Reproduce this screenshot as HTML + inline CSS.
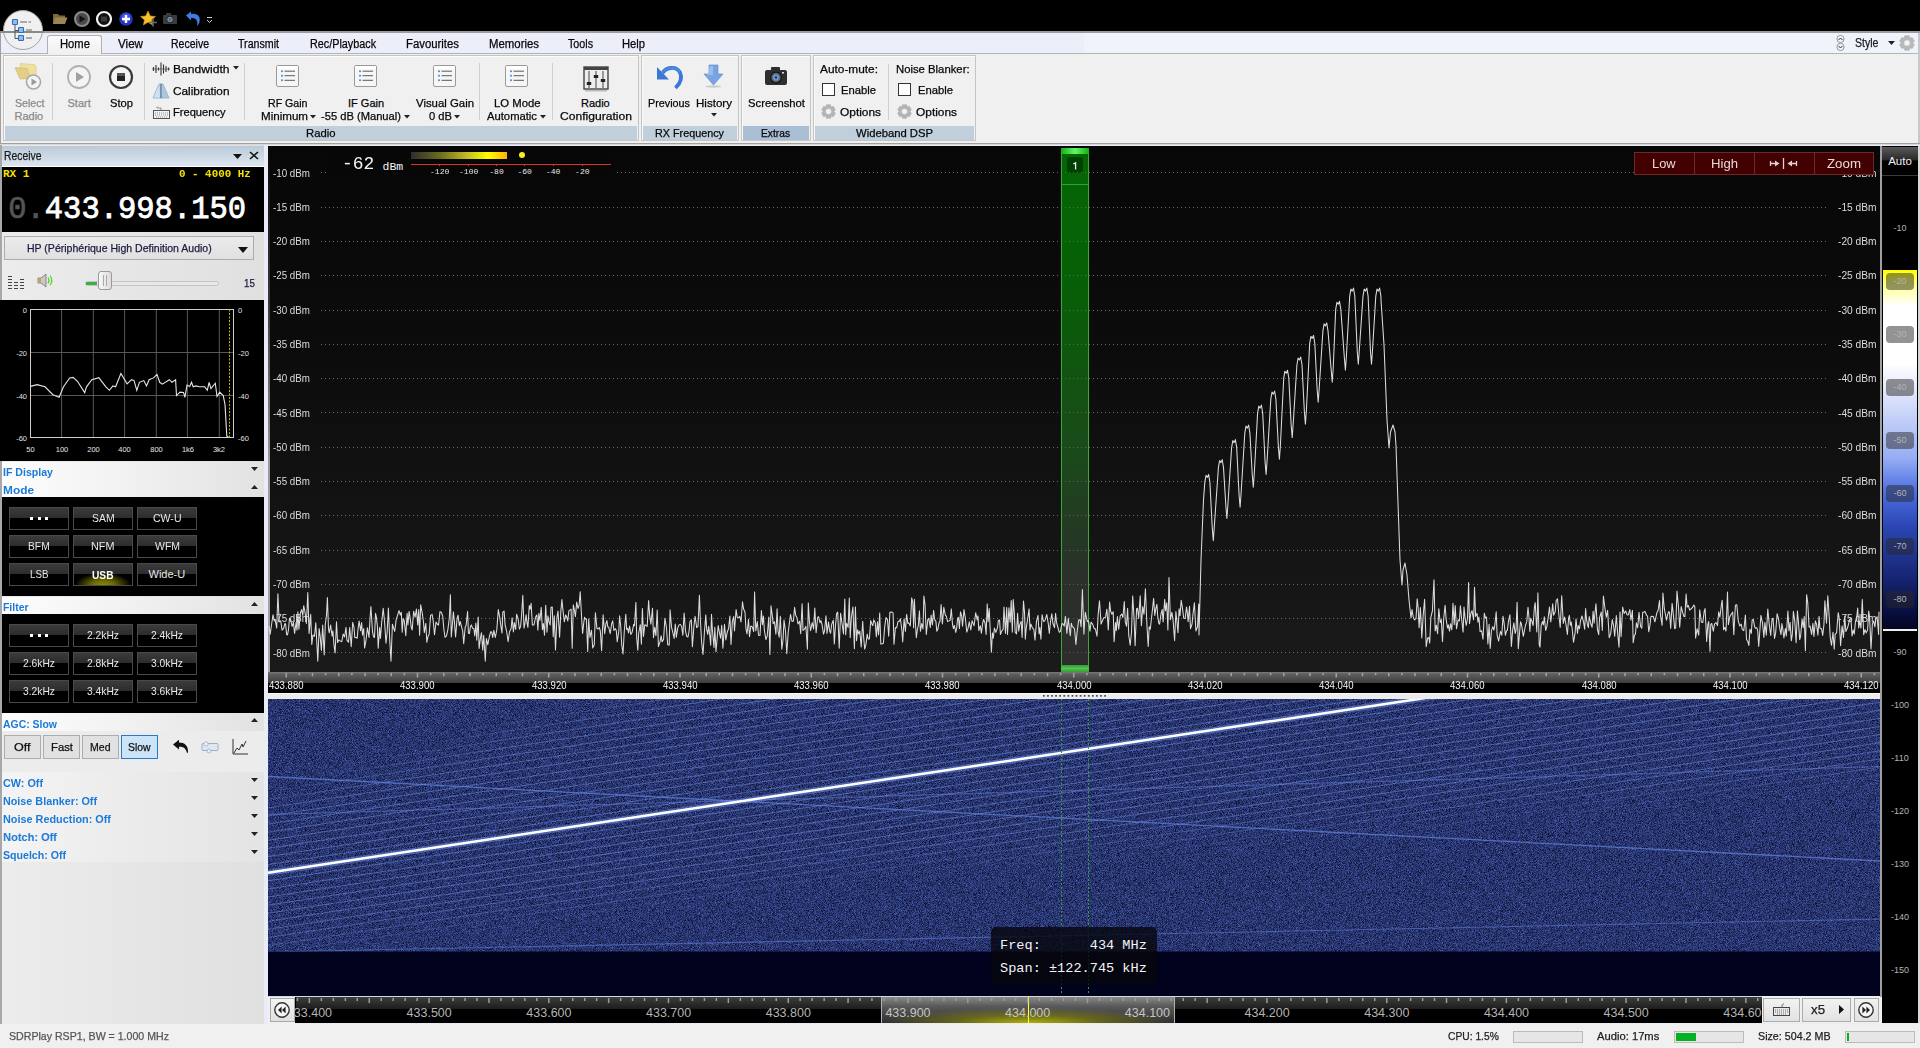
<!DOCTYPE html><html><head><meta charset="utf-8"><style>
*{margin:0;padding:0;box-sizing:border-box}
html,body{width:1920px;height:1048px;overflow:hidden;background:#e9ebf7;font-family:"Liberation Sans",sans-serif;font-size:12px;color:#000}
.a{position:absolute}
svg.a{overflow:visible}
.s{font-family:"Liberation Sans",sans-serif;-webkit-text-stroke:0.25px currentColor}
.m{font-family:"Liberation Mono",monospace}
</style></head><body><div class="a" style="left:0;top:0;width:1920px;height:31px;background:#000"></div>
<div class="a" style="left:0;top:31px;width:1920px;height:2px;background:#9c9c9c"></div>
<div class="a" style="left:1px;top:33px;width:1083px;height:20px;background:#eceefa"></div>
<div class="a" style="left:1084px;top:33px;width:834px;height:20px;background:#eff3fb"></div>
<div class="a" style="left:0;top:33px;width:1px;height:112px;background:#a0a0a0"></div>
<div class="a" style="left:1918px;top:33px;width:2px;height:112px;background:#c8c8c8"></div>
<div class="a" style="left:1px;top:53px;width:1917px;height:1px;background:#b4b4b4"></div>
<div class="a" style="left:1px;top:54px;width:1917px;height:89px;background:#f0f0f0"></div>
<div class="a" style="left:0;top:143px;width:1920px;height:1px;background:#a0a0a0"></div>
<div class="a" style="left:0;top:144px;width:1920px;height:1px;background:#d8d8d8"></div>
<div class="a" style="left:47px;top:35px;width:55px;height:19px;background:linear-gradient(#fbfbfb,#f0f0f0);border:1px solid #b0b0b0;border-bottom:none;border-radius:3px 3px 0 0"></div>
<div class="a s" style="left:60.0px;top:36.84px;font-weight:normal;font-size:12px;line-height:14px;color:#080808;white-space:nowrap;transform:scaleX(0.937);transform-origin:0 0;">Home</div>
<div class="a s" style="left:118.0px;top:36.84px;font-weight:normal;font-size:12px;line-height:14px;color:#080808;white-space:nowrap;transform:scaleX(0.969);transform-origin:0 0;">View</div>
<div class="a s" style="left:171.0px;top:36.84px;font-weight:normal;font-size:12px;line-height:14px;color:#080808;white-space:nowrap;transform:scaleX(0.877);transform-origin:0 0;">Receive</div>
<div class="a s" style="left:238.0px;top:36.84px;font-weight:normal;font-size:12px;line-height:14px;color:#080808;white-space:nowrap;transform:scaleX(0.887);transform-origin:0 0;">Transmit</div>
<div class="a s" style="left:310.0px;top:36.84px;font-weight:normal;font-size:12px;line-height:14px;color:#080808;white-space:nowrap;transform:scaleX(0.900);transform-origin:0 0;">Rec/Playback</div>
<div class="a s" style="left:406.0px;top:36.84px;font-weight:normal;font-size:12px;line-height:14px;color:#080808;white-space:nowrap;transform:scaleX(0.946);transform-origin:0 0;">Favourites</div>
<div class="a s" style="left:489.0px;top:36.84px;font-weight:normal;font-size:12px;line-height:14px;color:#080808;white-space:nowrap;transform:scaleX(0.949);transform-origin:0 0;">Memories</div>
<div class="a s" style="left:568.0px;top:36.84px;font-weight:normal;font-size:12px;line-height:14px;color:#080808;white-space:nowrap;transform:scaleX(0.892);transform-origin:0 0;">Tools</div>
<div class="a s" style="left:622.0px;top:36.84px;font-weight:normal;font-size:12px;line-height:14px;color:#080808;white-space:nowrap;transform:scaleX(0.932);transform-origin:0 0;">Help</div>
<div class="a" style="left:3px;top:10px;width:40px;height:40px;border-radius:50%;background:#f0f0f0;border:1px solid #a4a4a4"></div>
<div class="a" style="left:0;top:31px;width:44px;height:2px;background:#8a8a8a"></div>
<svg class="a" style="left:10px;top:17px" width="26" height="26" viewBox="0 0 26 26">
<path d="M5 8 V21.5 H8.5 M5 13.5 H8.5" stroke="#555" stroke-width="1" fill="none"/>
<rect x="2.5" y="2.5" width="5" height="5" rx=".8" fill="#8fc0ea" stroke="#2f6db5" stroke-width="1.1"/>
<rect x="8.5" y="10.5" width="5" height="5" rx=".8" fill="#8fc0ea" stroke="#2f6db5" stroke-width="1.1"/>
<rect x="8.5" y="18.5" width="5" height="5" rx=".8" fill="#8fc0ea" stroke="#2f6db5" stroke-width="1.1"/>
<path d="M10 5 H17 M18.5 5 H21 M16 13 H22 M16 21 H22" stroke="#555" stroke-width=".9"/>
</svg>
<svg class="a" style="left:50px;top:8px" width="170" height="22" viewBox="0 0 170 22">
<path d="M3 6 H8 L9.5 7.5 H15 V16 H3 Z" fill="#7a6a3a"/><path d="M3 16 L5 9.5 H17.5 L15 16 Z" fill="#9a8650"/>
<circle cx="32" cy="11" r="7" fill="#4a4a4a" stroke="#8a8a8a" stroke-width="2"/><path d="M29.5 7.5 L35.5 11 L29.5 14.5Z" fill="#111"/>
<circle cx="54" cy="11" r="7" fill="#111" stroke="#f2f2f2" stroke-width="2.2"/><rect x="51" y="8.5" width="6" height="5" fill="#3a3a3a"/>
<circle cx="76" cy="11" r="6.8" fill="#2535c8"/><circle cx="76" cy="9.5" r="4.5" fill="#4a6ae8" opacity=".6"/><path d="M76 7 V15 M72 11 H80" stroke="#fff" stroke-width="2.4"/>
<path d="M98 3 L100.3 8 L105.5 8.5 L101.5 12 L102.7 17 L98 14.3 L93.3 17 L94.5 12 L90.5 8.5 L95.7 8Z" fill="#f6c030" stroke="#e09010" stroke-width=".6"/><path d="M103 10.5 V18.5 M99 14.5 H107" stroke="#6a6a6a" stroke-width="1.6"/>
<rect x="113" y="7" width="14" height="9" rx="1" fill="#3c3c3c"/><rect x="116" y="5" width="5" height="3" fill="#3c3c3c"/><circle cx="120" cy="11.5" r="3.3" fill="#7a8a9a" stroke="#222" stroke-width="1"/><circle cx="120" cy="11.5" r="1.3" fill="#3a6aa0"/>
<path d="M136 7.5 L141 3.5 V6 C147 5 151 8.5 149.5 14 C149 16 148 17 147 18 C148 14 147 9.5 141 10 V12.5Z" fill="#3d7de0"/>
<path d="M157 9.5 H162 M157 12 L159.5 14.5 L162 12" stroke="#ccc" stroke-width="1" fill="none"/>
</svg>
<svg class="a" style="left:1834px;top:35px" width="13" height="16" viewBox="0 0 13 16"><circle cx="6.5" cy="4" r="3.6" fill="none" stroke="#999" stroke-width="1"/><circle cx="6.5" cy="12" r="3.6" fill="none" stroke="#999" stroke-width="1"/><path d="M4.5 5 L6.5 3 L8.5 5 M4.5 11 L6.5 13 L8.5 11" stroke="#333" stroke-width="1" fill="none"/></svg>
<div class="a s" style="left:1855.0px;top:35.84px;font-weight:normal;font-size:12px;line-height:14px;color:#1e1e1e;white-space:nowrap;transform:scaleX(0.881);transform-origin:0 0;">Style</div>
<svg class="a" style="left:1888px;top:41px" width="7" height="4"><path d="M0 0H7L3.5 4Z" fill="#222"/></svg>
<svg class="a" style="left:1899px;top:35px" width="16" height="16" viewBox="0 0 16 16"><path d="M5.22 3.14 L5.75 0.74 L10.25 0.74 L10.78 3.14 L10.82 3.16 L13.16 2.42 L15.41 6.31 L13.60 7.98 L13.60 8.02 L15.41 9.69 L13.16 13.58 L10.82 12.84 L10.78 12.86 L10.25 15.26 L5.75 15.26 L5.22 12.86 L5.18 12.84 L2.84 13.58 L0.59 9.69 L2.40 8.02 L2.40 7.98 L0.59 6.31 L2.84 2.42 L5.18 3.16Z" fill="#b8b8b8" stroke="#a8a8a8" stroke-width=".5"/><circle cx="8" cy="8" r="3.2" fill="#f2f2f2" stroke="#aaa" stroke-width=".5"/></svg>
<div class="a" style="left:3px;top:55px;width:636px;height:86px;border:1px solid #c4c4c4;background:#f0f0f0;box-shadow:inset 1px 1px 0 #fbfbfb"></div><div class="a" style="left:5px;top:126px;width:632px;height:14px;background:#c1cfdd"></div><div class="a s" style="left:306.0px;top:126.99px;font-weight:normal;font-size:11px;line-height:13px;color:#080808;white-space:nowrap;transform:scaleX(1.026);transform-origin:0 0;">Radio</div>
<div class="a" style="left:641px;top:55px;width:98px;height:86px;border:1px solid #c4c4c4;background:#f0f0f0;box-shadow:inset 1px 1px 0 #fbfbfb"></div><div class="a" style="left:643px;top:126px;width:94px;height:14px;background:#c1cfdd"></div><div class="a s" style="left:655.0px;top:126.99px;font-weight:normal;font-size:11px;line-height:13px;color:#080808;white-space:nowrap;transform:scaleX(0.981);transform-origin:0 0;">RX Frequency</div>
<div class="a" style="left:741px;top:55px;width:70px;height:86px;border:1px solid #c4c4c4;background:#f0f0f0;box-shadow:inset 1px 1px 0 #fbfbfb"></div><div class="a" style="left:743px;top:126px;width:66px;height:14px;background:#a9bdd5"></div><div class="a s" style="left:761.0px;top:126.99px;font-weight:normal;font-size:11px;line-height:13px;color:#080808;white-space:nowrap;transform:scaleX(0.930);transform-origin:0 0;">Extras</div>
<div class="a" style="left:813px;top:55px;width:163px;height:86px;border:1px solid #c4c4c4;background:#f0f0f0;box-shadow:inset 1px 1px 0 #fbfbfb"></div><div class="a" style="left:815px;top:126px;width:159px;height:14px;background:#c1cfdd"></div><div class="a s" style="left:856.0px;top:126.99px;font-weight:normal;font-size:11px;line-height:13px;color:#080808;white-space:nowrap;transform:scaleX(1.024);transform-origin:0 0;">Wideband DSP</div>
<svg class="a" style="left:14px;top:62px" width="30" height="30" viewBox="0 0 30 30">
<path d="M6 1.5 L20 2.5 L22 4 V16 L8 16 Z" fill="#efe0a0" stroke="#d8c27a" stroke-width=".6"/>
<path d="M1 5.5 L13 6.5 L17 16.5 L6 17 Z" fill="#e2cf86" stroke="#cdb56a" stroke-width=".6"/>
<circle cx="19.5" cy="20" r="7" fill="#f4f4f4" stroke="#a8a8a8" stroke-width="1.6"/><path d="M17.5 16.5 L23 20 L17.5 23.5Z" fill="#9a9a9a"/>
</svg>
<div class="a s" style="left:14.5px;top:97.39px;font-weight:normal;font-size:11px;line-height:13px;color:#8a8a8a;white-space:nowrap;transform:scaleX(0.965);transform-origin:0 0;">Select</div>
<div class="a s" style="left:14.5px;top:110.39px;font-weight:normal;font-size:11px;line-height:13px;color:#8a8a8a;white-space:nowrap;">Radio</div>
<div class="a" style="left:52px;top:63px;width:1px;height:57px;background:#cfcfcf"></div>
<svg class="a" style="left:66px;top:64px" width="26" height="26" viewBox="0 0 26 26"><circle cx="13" cy="13" r="11" fill="#f4f4f4" stroke="#b0b0b0" stroke-width="1.8"/><path d="M10 8 L18 13 L10 18Z" fill="#a0a0a0"/></svg>
<svg class="a" style="left:108px;top:64px" width="26" height="26" viewBox="0 0 26 26"><circle cx="13" cy="13" r="11" fill="#f4f4f4" stroke="#3a3a3a" stroke-width="2.2"/><rect x="9" y="9" width="8" height="8" fill="#222"/><rect x="9" y="9" width="8" height="3" fill="#555"/></svg>
<div class="a s" style="left:67.5px;top:97.39px;font-weight:normal;font-size:11px;line-height:13px;color:#8a8a8a;white-space:nowrap;">Start</div>
<div class="a s" style="left:109.5px;top:97.39px;font-weight:normal;font-size:11px;line-height:13px;color:#080808;white-space:nowrap;transform:scaleX(1.016);transform-origin:0 0;">Stop</div>
<div class="a" style="left:144px;top:63px;width:1px;height:57px;background:#cfcfcf"></div>
<svg class="a" style="left:152px;top:62px" width="18" height="14" viewBox="0 0 18 14"><path d="M1.5 5V9M4 3V11M6.5 5.5V8.5M9 0.5V13.5M11.5 2.5V11.5M14 4V10M16.5 5.5V8.5" stroke="#333" stroke-width="1.1"/><path d="M0 7H18" stroke="#555" stroke-width=".8"/></svg>
<div class="a s" style="left:172.5px;top:62.59px;font-weight:normal;font-size:11px;line-height:13px;color:#080808;white-space:nowrap;transform:scaleX(1.100);transform-origin:0 0;">Bandwidth</div>
<svg class="a" style="left:233px;top:66px" width="6" height="4"><path d="M0 0H6L3 3.5Z" fill="#222"/></svg>
<svg class="a" style="left:152px;top:83px" width="18" height="16" viewBox="0 0 18 16"><path d="M7 1 H10 L10.5 15 H1 Z" fill="#cfe3f2" stroke="#8aaed0" stroke-width=".8"/><path d="M8 1 H11 L17 15 H8.5Z" fill="#a8c8e6" stroke="#8aaed0" stroke-width=".8"/><path d="M9 1V15" stroke="#666" stroke-width="1"/></svg>
<div class="a s" style="left:172.5px;top:84.69px;font-weight:normal;font-size:11px;line-height:13px;color:#080808;white-space:nowrap;transform:scaleX(1.075);transform-origin:0 0;">Calibration</div>
<svg class="a" style="left:153px;top:106px" width="17" height="13" viewBox="0 0 17 13"><rect x=".5" y="4.5" width="16" height="8" fill="#f4f4f4" stroke="#555" stroke-width="1"/><path d="M2 7H15M2 9H15M3 11H14" stroke="#777" stroke-width=".8" stroke-dasharray="1 1"/><path d="M8 4.5 V2 H4 V0.5" stroke="#777" stroke-width=".8" fill="none"/></svg>
<div class="a s" style="left:172.5px;top:106.19px;font-weight:normal;font-size:11px;line-height:13px;color:#080808;white-space:nowrap;transform:scaleX(1.010);transform-origin:0 0;">Frequency</div>
<div class="a" style="left:244px;top:63px;width:1px;height:57px;background:#cfcfcf"></div>
<svg class="a" style="left:275px;top:64px" width="25" height="24" viewBox="0 0 25 24">
<rect x="1.5" y="1.5" width="22" height="21" rx="1.5" fill="#f6f6f6" stroke="#9a9a9a" stroke-width="1"/>
<rect x="2" y="2" width="21" height="3" fill="#fff"/>
<circle cx="7" cy="7.2" r="1" fill="#3a8ad8"/><circle cx="7" cy="11.7" r="1" fill="#3a8ad8"/><circle cx="7" cy="16.3" r="1" fill="#3a8ad8"/>
<path d="M9.5 7.2H20M9.5 11.7H20M9.5 16.3H20" stroke="#5a5a5a" stroke-width="1"/>
</svg>
<div class="a s" style="left:268.0px;top:97.39px;font-weight:normal;font-size:11px;line-height:13px;color:#080808;white-space:nowrap;transform:scaleX(0.965);transform-origin:0 0;">RF Gain</div>
<div class="a s" style="left:260.5px;top:110.19px;font-weight:normal;font-size:11px;line-height:13px;color:#080808;white-space:nowrap;transform:scaleX(1.054);transform-origin:0 0;">Minimum</div>
<svg class="a" style="left:353px;top:64px" width="25" height="24" viewBox="0 0 25 24">
<rect x="1.5" y="1.5" width="22" height="21" rx="1.5" fill="#f6f6f6" stroke="#9a9a9a" stroke-width="1"/>
<rect x="2" y="2" width="21" height="3" fill="#fff"/>
<circle cx="7" cy="7.2" r="1" fill="#3a8ad8"/><circle cx="7" cy="11.7" r="1" fill="#3a8ad8"/><circle cx="7" cy="16.3" r="1" fill="#3a8ad8"/>
<path d="M9.5 7.2H20M9.5 11.7H20M9.5 16.3H20" stroke="#5a5a5a" stroke-width="1"/>
</svg>
<div class="a s" style="left:348.0px;top:97.39px;font-weight:normal;font-size:11px;line-height:13px;color:#080808;white-space:nowrap;">IF Gain</div>
<div class="a s" style="left:321.0px;top:110.19px;font-weight:normal;font-size:11px;line-height:13px;color:#080808;white-space:nowrap;transform:scaleX(1.014);transform-origin:0 0;">-55 dB (Manual)</div>
<svg class="a" style="left:432px;top:64px" width="25" height="24" viewBox="0 0 25 24">
<rect x="1.5" y="1.5" width="22" height="21" rx="1.5" fill="#f6f6f6" stroke="#9a9a9a" stroke-width="1"/>
<rect x="2" y="2" width="21" height="3" fill="#fff"/>
<circle cx="7" cy="7.2" r="1" fill="#3a8ad8"/><circle cx="7" cy="11.7" r="1" fill="#3a8ad8"/><circle cx="7" cy="16.3" r="1" fill="#3a8ad8"/>
<path d="M9.5 7.2H20M9.5 11.7H20M9.5 16.3H20" stroke="#5a5a5a" stroke-width="1"/>
</svg>
<div class="a s" style="left:416.0px;top:97.39px;font-weight:normal;font-size:11px;line-height:13px;color:#080808;white-space:nowrap;transform:scaleX(1.035);transform-origin:0 0;">Visual Gain</div>
<div class="a s" style="left:429.0px;top:110.19px;font-weight:normal;font-size:11px;line-height:13px;color:#080808;white-space:nowrap;transform:scaleX(1.016);transform-origin:0 0;">0 dB</div>
<svg class="a" style="left:310px;top:115px" width="6" height="4"><path d="M0 0H6L3 3.5Z" fill="#222"/></svg>
<svg class="a" style="left:404px;top:115px" width="6" height="4"><path d="M0 0H6L3 3.5Z" fill="#222"/></svg>
<svg class="a" style="left:454px;top:115px" width="6" height="4"><path d="M0 0H6L3 3.5Z" fill="#222"/></svg>
<div class="a" style="left:479px;top:63px;width:1px;height:57px;background:#cfcfcf"></div>
<svg class="a" style="left:504px;top:64px" width="25" height="24" viewBox="0 0 25 24">
<rect x="1.5" y="1.5" width="22" height="21" rx="1.5" fill="#f6f6f6" stroke="#9a9a9a" stroke-width="1"/>
<rect x="2" y="2" width="21" height="3" fill="#fff"/>
<circle cx="7" cy="7.2" r="1" fill="#3a8ad8"/><circle cx="7" cy="11.7" r="1" fill="#3a8ad8"/><circle cx="7" cy="16.3" r="1" fill="#3a8ad8"/>
<path d="M9.5 7.2H20M9.5 11.7H20M9.5 16.3H20" stroke="#5a5a5a" stroke-width="1"/>
</svg>
<div class="a s" style="left:494.0px;top:97.39px;font-weight:normal;font-size:11px;line-height:13px;color:#080808;white-space:nowrap;transform:scaleX(1.028);transform-origin:0 0;">LO Mode</div>
<div class="a s" style="left:487.0px;top:110.19px;font-weight:normal;font-size:11px;line-height:13px;color:#080808;white-space:nowrap;transform:scaleX(1.022);transform-origin:0 0;">Automatic</div>
<svg class="a" style="left:540px;top:115px" width="6" height="4"><path d="M0 0H6L3 3.5Z" fill="#222"/></svg>
<div class="a" style="left:552px;top:63px;width:1px;height:57px;background:#cfcfcf"></div>
<svg class="a" style="left:583px;top:66px" width="26" height="26" viewBox="0 0 26 26">
<rect x="1" y="1" width="24" height="22" fill="#eee" stroke="#444" stroke-width="1.4"/><rect x="1" y="1" width="24" height="3" fill="#444"/>
<path d="M6 5V22M13 5V22M20 5V22" stroke="#444" stroke-width="1"/>
<rect x="3.8" y="16" width="4.4" height="3" fill="#222"/><rect x="10.8" y="9" width="4.4" height="3" fill="#222"/><rect x="17.8" y="13" width="4.4" height="3" fill="#222"/>
<rect x="2" y="24" width="22" height="1.5" fill="#bbb"/>
</svg>
<div class="a s" style="left:581.0px;top:97.39px;font-weight:normal;font-size:11px;line-height:13px;color:#080808;white-space:nowrap;">Radio</div>
<div class="a s" style="left:560.0px;top:110.19px;font-weight:normal;font-size:11px;line-height:13px;color:#080808;white-space:nowrap;transform:scaleX(1.100);transform-origin:0 0;">Configuration</div>
<svg class="a" style="left:655px;top:63px" width="30" height="28" viewBox="0 0 30 28"><path d="M2 4 L2 16.5 L14 16.5Z" fill="#3a78d8"/><path d="M7 11 C10 4.5, 21 2, 25 9.5 C27.5 14.5, 25 20.5, 20.5 25" stroke="#3a78d8" stroke-width="3.8" fill="none" stroke-linecap="butt"/><path d="M7 11 C10 4.5, 21 2, 25 9.5" stroke="#6aa0f0" stroke-width="1.2" fill="none" opacity=".6"/></svg>
<div class="a s" style="left:648.0px;top:97.39px;font-weight:normal;font-size:11px;line-height:13px;color:#080808;white-space:nowrap;transform:scaleX(0.981);transform-origin:0 0;">Previous</div>
<svg class="a" style="left:703px;top:64px" width="21" height="24" viewBox="0 0 21 24"><path d="M6 1 H15 V10 H20 L10.5 21 L1 10 H6Z" fill="#7aa4e2" stroke="#5a86c8" stroke-width=".6"/><path d="M7 2 H10 V11 H4Z" fill="#a8c6f0" opacity=".7"/><ellipse cx="10.5" cy="22.5" rx="8" ry="1.2" fill="#ccc"/></svg>
<div class="a s" style="left:696.0px;top:97.39px;font-weight:normal;font-size:11px;line-height:13px;color:#080808;white-space:nowrap;transform:scaleX(1.052);transform-origin:0 0;">History</div>
<svg class="a" style="left:710.5px;top:113px" width="6" height="4"><path d="M0 0H6L3 3.5Z" fill="#222"/></svg>
<svg class="a" style="left:764px;top:66px" width="24" height="20" viewBox="0 0 24 20"><rect x="1" y="4" width="22" height="15" rx="2" fill="#2e2e2e"/><rect x="7" y="1" width="9" height="4" rx="1" fill="#2e2e2e"/><circle cx="12" cy="11.5" r="5.3" fill="#5a6a7a" stroke="#151515" stroke-width="1.2"/><circle cx="12" cy="11.5" r="3" fill="#6a9ad0"/><circle cx="12" cy="11.5" r="1.2" fill="#1e3a60"/><rect x="18" y="6" width="2" height="1.5" fill="#ddd"/></svg>
<div class="a s" style="left:748.0px;top:97.39px;font-weight:normal;font-size:11px;line-height:13px;color:#080808;white-space:nowrap;transform:scaleX(1.024);transform-origin:0 0;">Screenshot</div>
<div class="a s" style="left:820.0px;top:62.99px;font-weight:normal;font-size:11px;line-height:13px;color:#080808;white-space:nowrap;transform:scaleX(1.078);transform-origin:0 0;">Auto-mute:</div>
<div class="a s" style="left:896.0px;top:62.99px;font-weight:normal;font-size:11px;line-height:13px;color:#080808;white-space:nowrap;transform:scaleX(1.028);transform-origin:0 0;">Noise Blanker:</div>
<div class="a" style="left:822px;top:83px;width:13px;height:13px;background:#fff;border:1px solid #333"></div>
<div class="a" style="left:898px;top:83px;width:13px;height:13px;background:#fff;border:1px solid #333"></div>
<div class="a s" style="left:841.0px;top:84.49px;font-weight:normal;font-size:11px;line-height:13px;color:#080808;white-space:nowrap;transform:scaleX(1.022);transform-origin:0 0;">Enable</div>
<div class="a s" style="left:917.5px;top:84.49px;font-weight:normal;font-size:11px;line-height:13px;color:#080808;white-space:nowrap;transform:scaleX(1.022);transform-origin:0 0;">Enable</div>
<svg class="a" style="left:821px;top:104px" width="15" height="15" viewBox="0 0 16 16"><path d="M5.22 3.14 L5.75 0.74 L10.25 0.74 L10.78 3.14 L10.82 3.16 L13.16 2.42 L15.41 6.31 L13.60 7.98 L13.60 8.02 L15.41 9.69 L13.16 13.58 L10.82 12.84 L10.78 12.86 L10.25 15.26 L5.75 15.26 L5.22 12.86 L5.18 12.84 L2.84 13.58 L0.59 9.69 L2.40 8.02 L2.40 7.98 L0.59 6.31 L2.84 2.42 L5.18 3.16Z" fill="#b4b4b4" stroke="#a8a8a8" stroke-width=".5"/><circle cx="8" cy="8" r="3.2" fill="#f2f2f2" stroke="#aaa" stroke-width=".5"/></svg>
<svg class="a" style="left:897px;top:104px" width="15" height="15" viewBox="0 0 16 16"><path d="M5.22 3.14 L5.75 0.74 L10.25 0.74 L10.78 3.14 L10.82 3.16 L13.16 2.42 L15.41 6.31 L13.60 7.98 L13.60 8.02 L15.41 9.69 L13.16 13.58 L10.82 12.84 L10.78 12.86 L10.25 15.26 L5.75 15.26 L5.22 12.86 L5.18 12.84 L2.84 13.58 L0.59 9.69 L2.40 8.02 L2.40 7.98 L0.59 6.31 L2.84 2.42 L5.18 3.16Z" fill="#b4b4b4" stroke="#a8a8a8" stroke-width=".5"/><circle cx="8" cy="8" r="3.2" fill="#f2f2f2" stroke="#aaa" stroke-width=".5"/></svg>
<div class="a s" style="left:840.0px;top:105.99px;font-weight:normal;font-size:11px;line-height:13px;color:#080808;white-space:nowrap;transform:scaleX(1.082);transform-origin:0 0;">Options</div>
<div class="a s" style="left:916.0px;top:105.99px;font-weight:normal;font-size:11px;line-height:13px;color:#080808;white-space:nowrap;transform:scaleX(1.082);transform-origin:0 0;">Options</div>
<div class="a" style="left:888px;top:64px;width:1px;height:56px;background:#cfcfcf"></div>
<div class="a" style="left:0;top:145px;width:2px;height:879px;background:#a8a8a8"></div>
<div class="a" style="left:2px;top:145px;width:262px;height:879px;background:linear-gradient(90deg,#ececec,#e0e0e0)"></div>
<div class="a" style="left:2px;top:146px;width:262px;height:20px;background:linear-gradient(#bccad8,#dce6f1)"></div>
<div class="a s" style="left:4.3px;top:148.84px;font-weight:normal;font-size:12px;line-height:14px;color:#1b1b1b;white-space:nowrap;transform:scaleX(0.863);transform-origin:0 0;">Receive</div>
<svg class="a" style="left:233px;top:154px" width="9" height="5"><path d="M0 0H9L4.5 5Z" fill="#111"/></svg>
<svg class="a" style="left:249px;top:151px" width="10" height="9"><path d="M1 1L9 8M9 1L1 8" stroke="#111" stroke-width="1.6"/></svg>
<div class="a" style="left:2px;top:166px;width:262px;height:1px;background:#fff"></div>
<div class="a" style="left:2px;top:167px;width:262px;height:65px;background:#000"></div>
<div class="a m" style="left:3.0px;top:168.37px;font-weight:bold;font-size:11px;line-height:13px;color:#f4e000;white-space:nowrap;;-webkit-text-stroke:0">RX 1</div>
<div class="a m" style="left:178.7px;top:167.97px;font-weight:bold;font-size:11px;line-height:13px;color:#f4e000;white-space:nowrap;transform:scaleX(0.989);transform-origin:0 0;;-webkit-text-stroke:0">0 - 4000 Hz</div>
<div class="a m" style="left:8.2px;top:191.68px;font-weight:normal;font-size:30.5px;line-height:37px;color:#555555;white-space:nowrap;-webkit-text-stroke:0.7px #555">0.</div>
<div class="a m" style="left:44.8px;top:191.68px;font-weight:normal;font-size:30.5px;line-height:37px;color:#ffffff;white-space:nowrap;-webkit-text-stroke:0.8px #fff">433.998.150</div>
<div class="a" style="left:4px;top:236px;width:250px;height:24px;background:linear-gradient(#ebebeb,#e0e0e0);border:1px solid #acacac"></div>
<div class="a s" style="left:27.2px;top:241.89px;font-weight:normal;font-size:11px;line-height:13px;color:#1a1a40;white-space:nowrap;transform:scaleX(0.957);transform-origin:0 0;">HP (Périphérique High Definition Audio)</div>
<svg class="a" style="left:238px;top:247px" width="10" height="6"><path d="M0 0H10L5 6Z" fill="#111"/></svg>
<svg class="a" style="left:8px;top:276px" width="17" height="14" viewBox="0 0 17 14"><g fill="#444"><rect x="0" y="0" width="4" height="1"/><rect x="0" y="3" width="4" height="1"/><rect x="0" y="6" width="4" height="1"/><rect x="0" y="9" width="4" height="1"/><rect x="0" y="12" width="4" height="1"/>
<rect x="6" y="6" width="4" height="1"/><rect x="6" y="9" width="4" height="1"/><rect x="6" y="12" width="4" height="1"/>
<rect x="12" y="3" width="4" height="1"/><rect x="12" y="6" width="4" height="1"/><rect x="12" y="9" width="4" height="1"/><rect x="12" y="12" width="4" height="1"/></g></svg>
<svg class="a" style="left:37px;top:273px" width="18" height="15" viewBox="0 0 18 15"><path d="M1 5H4L9 1V14L4 10H1Z" fill="#c8c8c8" stroke="#777" stroke-width=".8"/><path d="M2 6H4V9H2Z" fill="#e0a020"/><path d="M11 4.5Q13 7.5 11 10.5M13 2.5Q16.5 7.5 13 12.5" stroke="#5ad030" stroke-width="1.2" fill="none"/></svg>
<div class="a" style="left:85px;top:281px;width:134px;height:5px;border-radius:3px;background:#e8e8e8;border:1px solid #c4c4c4"></div>
<div class="a" style="left:86px;top:282px;width:11px;height:3px;background:#3cb040"></div>
<div class="a" style="left:98px;top:271px;width:14px;height:19px;border-radius:3px;background:linear-gradient(90deg,#f8f8f8,#dcdcdc);border:1px solid #9a9a9a"></div>
<div class="a" style="left:103px;top:275px;width:1px;height:11px;background:#aaa"></div><div class="a" style="left:106px;top:275px;width:1px;height:11px;background:#aaa"></div>
<div class="a s" style="left:243.9px;top:276.69px;font-weight:normal;font-size:11px;line-height:13px;color:#1a1a40;white-space:nowrap;transform:scaleX(0.883);transform-origin:0 0;">15</div>
<div class="a" style="left:0px;top:300px;width:264px;height:161px;background:#000"></div>
<svg class="a" style="left:0;top:0" width="264" height="470" viewBox="0 0 264 470"><path d="M61.6 309.5V437.5" stroke="#585858" stroke-width="1"/><path d="M93.3 309.5V437.5" stroke="#585858" stroke-width="1"/><path d="M124.6 309.5V437.5" stroke="#585858" stroke-width="1"/><path d="M156.3 309.5V437.5" stroke="#585858" stroke-width="1"/><path d="M187.4 309.5V437.5" stroke="#585858" stroke-width="1"/><path d="M219.3 309.5V437.5" stroke="#585858" stroke-width="1"/><path d="M30.5 352.5H233.5" stroke="#585858" stroke-width="1"/><path d="M30.5 395.5H233.5" stroke="#585858" stroke-width="1"/><rect x="30.5" y="309.5" width="203.0" height="128.0" fill="none" stroke="#cfcfcf" stroke-width="1"/><path d="M229.5 309.5V437.5" stroke="#c8b400" stroke-width="1" stroke-dasharray="2 1.5"/><text x="27" y="312.5" fill="#e0e0e0" font-size="7.5" text-anchor="end" class="s">0</text><text x="238" y="312.5" fill="#e0e0e0" font-size="7.5" class="s">0</text><text x="27" y="355.5" fill="#e0e0e0" font-size="7.5" text-anchor="end" class="s">-20</text><text x="238" y="355.5" fill="#e0e0e0" font-size="7.5" class="s">-20</text><text x="27" y="398.5" fill="#e0e0e0" font-size="7.5" text-anchor="end" class="s">-40</text><text x="238" y="398.5" fill="#e0e0e0" font-size="7.5" class="s">-40</text><text x="27" y="441" fill="#e0e0e0" font-size="7.5" text-anchor="end" class="s">-60</text><text x="238" y="441" fill="#e0e0e0" font-size="7.5" class="s">-60</text><text x="30.5" y="451.5" fill="#e8e8e8" font-size="7.5" text-anchor="middle" class="s">50</text><text x="62" y="451.5" fill="#e8e8e8" font-size="7.5" text-anchor="middle" class="s">100</text><text x="93.5" y="451.5" fill="#e8e8e8" font-size="7.5" text-anchor="middle" class="s">200</text><text x="124.5" y="451.5" fill="#e8e8e8" font-size="7.5" text-anchor="middle" class="s">400</text><text x="156.5" y="451.5" fill="#e8e8e8" font-size="7.5" text-anchor="middle" class="s">800</text><text x="188" y="451.5" fill="#e8e8e8" font-size="7.5" text-anchor="middle" class="s">1k6</text><text x="219" y="451.5" fill="#e8e8e8" font-size="7.5" text-anchor="middle" class="s">3k2</text><path d="M30.5 386.4 L37.1 384.6 L45.0 386.8 L52.9 394.7 L59.1 397.3 L63.5 386.8 L69.7 377.9 L73.2 377.4 L77.6 381.5 L84.7 392.6 L86.5 386.8 L91.8 379.7 L98.8 377.6 L105.9 386.8 L109.4 390.3 L112.9 385.9 L115.6 386.8 L120.9 373.5 L127.1 383.8 L131.5 379.7 L134.1 380.6 L136.8 390.3 L139.4 382.3 L143.8 380.6 L146.5 385.9 L149.1 379.7 L153.5 377.9 L157.0 374.4 L159.7 382.3 L162.3 384.1 L169.4 379.7 L172.0 382.3 L175.6 379.7 L176.5 395.6 L180.0 392.1 L183.5 392.4 L184.9 397.3 L187.0 385.0 L189.7 386.4 L191.5 382.3 L193.2 386.8 L195.9 385.9 L199.4 386.8 L204.7 386.8 L207.3 390.3 L209.1 382.3 L210.9 388.5 L215.3 383.2 L217.0 396.5 L219.7 392.1 L223.2 395.6 L225.0 404.4 L226.8 436.2 L228.5 437.1" stroke="#e6e6e6" stroke-width="1.1" fill="none"/></svg>
<div class="a" style="left:2px;top:462px;width:262px;height:18px;background:linear-gradient(90deg,#fdfdfd 0%,#f2f2f2 45%,#e2e2e2 100%)"></div><div class="a s" style="left:3.0px;top:465.69px;font-weight:bold;font-size:11px;line-height:13px;color:#1a7ad8;white-space:nowrap;transform:scaleX(0.962);transform-origin:0 0;;-webkit-text-stroke:0">IF Display</div><svg class="a" style="left:251px;top:467px" width="7" height="4"><path d="M0 0H7L3.5 4Z" fill="#222"/></svg>
<div class="a" style="left:2px;top:480px;width:262px;height:17px;background:linear-gradient(90deg,#fdfdfd 0%,#f2f2f2 45%,#e2e2e2 100%)"></div><div class="a s" style="left:3.0px;top:483.69px;font-weight:bold;font-size:11px;line-height:13px;color:#1a7ad8;white-space:nowrap;transform:scaleX(1.079);transform-origin:0 0;;-webkit-text-stroke:0">Mode</div><svg class="a" style="left:251px;top:485px" width="7" height="4"><path d="M0 4H7L3.5 0Z" fill="#222"/></svg>
<div class="a" style="left:2px;top:497px;width:262px;height:99px;background:#000"></div>
<div class="a" style="left:9px;top:507px;width:60px;height:23px;border:1px solid #4a4a4a;background:linear-gradient(#3b3b3b 0,#2c2c2c 48%,#000 49%,#000 100%)"></div><div class="a" style="left:30.0px;top:517px;width:3px;height:3px;background:#fff"></div><div class="a" style="left:37.5px;top:517px;width:3px;height:3px;background:#fff"></div><div class="a" style="left:45.0px;top:517px;width:3px;height:3px;background:#fff"></div>
<div class="a" style="left:73px;top:507px;width:60px;height:23px;border:1px solid #4a4a4a;background:linear-gradient(#3b3b3b 0,#2c2c2c 48%,#000 49%,#000 100%)"></div><div class="a s" style="left:91.7px;top:512.19px;font-weight:normal;font-size:11px;line-height:13px;color:#e8e8e8;white-space:nowrap;transform:scaleX(0.948);transform-origin:0 0;;-webkit-text-stroke:0">SAM</div>
<div class="a" style="left:137px;top:507px;width:60px;height:23px;border:1px solid #4a4a4a;background:linear-gradient(#3b3b3b 0,#2c2c2c 48%,#000 49%,#000 100%)"></div><div class="a s" style="left:152.8px;top:512.19px;font-weight:normal;font-size:11px;line-height:13px;color:#e8e8e8;white-space:nowrap;transform:scaleX(0.958);transform-origin:0 0;;-webkit-text-stroke:0">CW-U</div>
<div class="a" style="left:9px;top:535px;width:60px;height:23px;border:1px solid #4a4a4a;background:linear-gradient(#3b3b3b 0,#2c2c2c 48%,#000 49%,#000 100%)"></div><div class="a s" style="left:28.1px;top:540.19px;font-weight:normal;font-size:11px;line-height:13px;color:#e8e8e8;white-space:nowrap;transform:scaleX(0.935);transform-origin:0 0;;-webkit-text-stroke:0">BFM</div>
<div class="a" style="left:73px;top:535px;width:60px;height:23px;border:1px solid #4a4a4a;background:linear-gradient(#3b3b3b 0,#2c2c2c 48%,#000 49%,#000 100%)"></div><div class="a s" style="left:91.3px;top:540.19px;font-weight:normal;font-size:11px;line-height:13px;color:#e8e8e8;white-space:nowrap;transform:scaleX(0.982);transform-origin:0 0;;-webkit-text-stroke:0">NFM</div>
<div class="a" style="left:137px;top:535px;width:60px;height:23px;border:1px solid #4a4a4a;background:linear-gradient(#3b3b3b 0,#2c2c2c 48%,#000 49%,#000 100%)"></div><div class="a s" style="left:154.5px;top:540.19px;font-weight:normal;font-size:11px;line-height:13px;color:#e8e8e8;white-space:nowrap;transform:scaleX(0.952);transform-origin:0 0;;-webkit-text-stroke:0">WFM</div>
<div class="a" style="left:9px;top:563px;width:60px;height:23px;border:1px solid #4a4a4a;background:linear-gradient(#3b3b3b 0,#2c2c2c 48%,#000 49%,#000 100%)"></div><div class="a s" style="left:29.8px;top:568.19px;font-weight:normal;font-size:11px;line-height:13px;color:#e8e8e8;white-space:nowrap;transform:scaleX(0.890);transform-origin:0 0;;-webkit-text-stroke:0">LSB</div>
<div class="a" style="left:73px;top:563px;width:60px;height:23px;border:1px solid #4a4a4a;background:linear-gradient(#3b3b3b 0,#2c2c2c 48%,#000 49%,#000 100%)"></div><div class="a" style="left:75px;top:573px;width:56px;height:12px;background:radial-gradient(ellipse 50% 100% at 50% 100%,#8a8a00 0%,#6a6a00 40%,rgba(60,60,0,0) 100%)"></div><div class="a s" style="left:92.2px;top:567.51px;font-weight:bold;font-size:11.5px;line-height:14px;color:#fff;white-space:nowrap;transform:scaleX(0.886);transform-origin:0 0;;-webkit-text-stroke:0">USB</div>
<div class="a" style="left:137px;top:563px;width:60px;height:23px;border:1px solid #4a4a4a;background:linear-gradient(#3b3b3b 0,#2c2c2c 48%,#000 49%,#000 100%)"></div><div class="a s" style="left:148.5px;top:568.19px;font-weight:normal;font-size:11px;line-height:13px;color:#e8e8e8;white-space:nowrap;;-webkit-text-stroke:0">Wide-U</div>
<div class="a" style="left:2px;top:597px;width:262px;height:17px;background:linear-gradient(90deg,#fdfdfd 0%,#f2f2f2 45%,#e2e2e2 100%)"></div><div class="a s" style="left:3.0px;top:600.69px;font-weight:bold;font-size:11px;line-height:13px;color:#1a7ad8;white-space:nowrap;transform:scaleX(0.948);transform-origin:0 0;;-webkit-text-stroke:0">Filter</div><svg class="a" style="left:251px;top:602px" width="7" height="4"><path d="M0 4H7L3.5 0Z" fill="#222"/></svg>
<div class="a" style="left:2px;top:614px;width:262px;height:99px;background:#000"></div>
<div class="a" style="left:9px;top:624px;width:60px;height:23px;border:1px solid #4a4a4a;background:linear-gradient(#3b3b3b 0,#2c2c2c 48%,#000 49%,#000 100%)"></div><div class="a" style="left:30.0px;top:634px;width:3px;height:3px;background:#fff"></div><div class="a" style="left:37.5px;top:634px;width:3px;height:3px;background:#fff"></div><div class="a" style="left:45.0px;top:634px;width:3px;height:3px;background:#fff"></div>
<div class="a" style="left:73px;top:624px;width:60px;height:23px;border:1px solid #4a4a4a;background:linear-gradient(#3b3b3b 0,#2c2c2c 48%,#000 49%,#000 100%)"></div><div class="a s" style="left:87.0px;top:629.19px;font-weight:normal;font-size:11px;line-height:13px;color:#e8e8e8;white-space:nowrap;transform:scaleX(0.935);transform-origin:0 0;;-webkit-text-stroke:0">2.2kHz</div>
<div class="a" style="left:137px;top:624px;width:60px;height:23px;border:1px solid #4a4a4a;background:linear-gradient(#3b3b3b 0,#2c2c2c 48%,#000 49%,#000 100%)"></div><div class="a s" style="left:151.0px;top:629.19px;font-weight:normal;font-size:11px;line-height:13px;color:#e8e8e8;white-space:nowrap;transform:scaleX(0.935);transform-origin:0 0;;-webkit-text-stroke:0">2.4kHz</div>
<div class="a" style="left:9px;top:652px;width:60px;height:23px;border:1px solid #4a4a4a;background:linear-gradient(#3b3b3b 0,#2c2c2c 48%,#000 49%,#000 100%)"></div><div class="a s" style="left:23.0px;top:657.19px;font-weight:normal;font-size:11px;line-height:13px;color:#e8e8e8;white-space:nowrap;transform:scaleX(0.935);transform-origin:0 0;;-webkit-text-stroke:0">2.6kHz</div>
<div class="a" style="left:73px;top:652px;width:60px;height:23px;border:1px solid #4a4a4a;background:linear-gradient(#3b3b3b 0,#2c2c2c 48%,#000 49%,#000 100%)"></div><div class="a s" style="left:87.0px;top:657.19px;font-weight:normal;font-size:11px;line-height:13px;color:#e8e8e8;white-space:nowrap;transform:scaleX(0.935);transform-origin:0 0;;-webkit-text-stroke:0">2.8kHz</div>
<div class="a" style="left:137px;top:652px;width:60px;height:23px;border:1px solid #4a4a4a;background:linear-gradient(#3b3b3b 0,#2c2c2c 48%,#000 49%,#000 100%)"></div><div class="a s" style="left:151.0px;top:657.19px;font-weight:normal;font-size:11px;line-height:13px;color:#e8e8e8;white-space:nowrap;transform:scaleX(0.935);transform-origin:0 0;;-webkit-text-stroke:0">3.0kHz</div>
<div class="a" style="left:9px;top:680px;width:60px;height:23px;border:1px solid #4a4a4a;background:linear-gradient(#3b3b3b 0,#2c2c2c 48%,#000 49%,#000 100%)"></div><div class="a s" style="left:23.0px;top:685.19px;font-weight:normal;font-size:11px;line-height:13px;color:#e8e8e8;white-space:nowrap;transform:scaleX(0.935);transform-origin:0 0;;-webkit-text-stroke:0">3.2kHz</div>
<div class="a" style="left:73px;top:680px;width:60px;height:23px;border:1px solid #4a4a4a;background:linear-gradient(#3b3b3b 0,#2c2c2c 48%,#000 49%,#000 100%)"></div><div class="a s" style="left:87.0px;top:685.19px;font-weight:normal;font-size:11px;line-height:13px;color:#e8e8e8;white-space:nowrap;transform:scaleX(0.935);transform-origin:0 0;;-webkit-text-stroke:0">3.4kHz</div>
<div class="a" style="left:137px;top:680px;width:60px;height:23px;border:1px solid #4a4a4a;background:linear-gradient(#3b3b3b 0,#2c2c2c 48%,#000 49%,#000 100%)"></div><div class="a s" style="left:151.0px;top:685.19px;font-weight:normal;font-size:11px;line-height:13px;color:#e8e8e8;white-space:nowrap;transform:scaleX(0.935);transform-origin:0 0;;-webkit-text-stroke:0">3.6kHz</div>
<div class="a" style="left:2px;top:713px;width:262px;height:18px;background:linear-gradient(90deg,#fdfdfd 0%,#f2f2f2 45%,#e2e2e2 100%)"></div><div class="a s" style="left:3.0px;top:717.69px;font-weight:bold;font-size:11px;line-height:13px;color:#1a7ad8;white-space:nowrap;transform:scaleX(0.950);transform-origin:0 0;;-webkit-text-stroke:0">AGC: Slow</div><svg class="a" style="left:251px;top:718px" width="7" height="4"><path d="M0 4H7L3.5 0Z" fill="#222"/></svg>
<div class="a" style="left:2px;top:731px;width:262px;height:41px;background:#ececec"></div>
<div class="a" style="left:4px;top:735px;width:37px;height:24px;background:#e1e1e1;border:1px solid #adadad"></div>
<div class="a s" style="left:14.2px;top:741.19px;font-weight:normal;font-size:11px;line-height:13px;color:#111;white-space:nowrap;transform:scaleX(1.140);transform-origin:0 0;">Off</div>
<div class="a" style="left:43px;top:735px;width:37px;height:24px;background:#e1e1e1;border:1px solid #adadad"></div>
<div class="a s" style="left:50.5px;top:741.19px;font-weight:normal;font-size:11px;line-height:13px;color:#111;white-space:nowrap;transform:scaleX(1.028);transform-origin:0 0;">Fast</div>
<div class="a" style="left:82px;top:735px;width:37px;height:24px;background:#e1e1e1;border:1px solid #adadad"></div>
<div class="a s" style="left:90.2px;top:741.19px;font-weight:normal;font-size:11px;line-height:13px;color:#111;white-space:nowrap;transform:scaleX(0.958);transform-origin:0 0;">Med</div>
<div class="a" style="left:121px;top:735px;width:37px;height:24px;background:#cce4f7;border:1px solid #2a78c8"></div>
<div class="a s" style="left:128.2px;top:741.19px;font-weight:normal;font-size:11px;line-height:13px;color:#111;white-space:nowrap;transform:scaleX(0.944);transform-origin:0 0;">Slow</div>
<svg class="a" style="left:172px;top:739px" width="17" height="15" viewBox="0 0 17 15"><path d="M1 5.5 L7 0.8 V3.5 C12.5 3.5 16.5 6.5 16 13.5 L15 14 C14 9.5 11.5 7.5 7 7.8 V10.5Z" fill="#111"/></svg>
<svg class="a" style="left:201px;top:741px" width="18" height="12" viewBox="0 0 18 12"><rect x="1" y="2.5" width="16" height="7" rx="1" fill="#dfe8f0" stroke="#9ab0c4" stroke-width="1"/><circle cx="5" cy="3" r="2.2" fill="#eef" stroke="#9ab0c4" stroke-width=".8"/><circle cx="8" cy="10" r="2" fill="#eef" stroke="#9ab0c4" stroke-width=".8"/></svg>
<svg class="a" style="left:232px;top:739px" width="17" height="16" viewBox="0 0 17 16"><path d="M1 0V15H16" stroke="#333" stroke-width="1" fill="none"/><path d="M2 14 L5 9 L7 11 L10 5 L11 8 L14 2" stroke="#333" stroke-width="1" fill="none"/></svg>
<div class="a" style="left:2px;top:772px;width:262px;height:90px;background:linear-gradient(90deg,#f4f4f4 0%,#ebebeb 50%,#e4e4e4 100%)"></div>
<div class="a s" style="left:3.0px;top:776.69px;font-weight:bold;font-size:11px;line-height:13px;color:#1a7ad8;white-space:nowrap;transform:scaleX(0.982);transform-origin:0 0;;-webkit-text-stroke:0">CW: Off</div>
<svg class="a" style="left:251px;top:778px" width="7" height="4"><path d="M0 0H7L3.5 4Z" fill="#222"/></svg>
<div class="a s" style="left:3.0px;top:794.69px;font-weight:bold;font-size:11px;line-height:13px;color:#1a7ad8;white-space:nowrap;transform:scaleX(0.980);transform-origin:0 0;;-webkit-text-stroke:0">Noise Blanker: Off</div>
<svg class="a" style="left:251px;top:796px" width="7" height="4"><path d="M0 0H7L3.5 4Z" fill="#222"/></svg>
<div class="a s" style="left:3.0px;top:812.69px;font-weight:bold;font-size:11px;line-height:13px;color:#1a7ad8;white-space:nowrap;transform:scaleX(0.987);transform-origin:0 0;;-webkit-text-stroke:0">Noise Reduction: Off</div>
<svg class="a" style="left:251px;top:814px" width="7" height="4"><path d="M0 0H7L3.5 4Z" fill="#222"/></svg>
<div class="a s" style="left:3.0px;top:830.69px;font-weight:bold;font-size:11px;line-height:13px;color:#1a7ad8;white-space:nowrap;;-webkit-text-stroke:0">Notch: Off</div>
<svg class="a" style="left:251px;top:832px" width="7" height="4"><path d="M0 0H7L3.5 4Z" fill="#222"/></svg>
<div class="a s" style="left:3.0px;top:848.69px;font-weight:bold;font-size:11px;line-height:13px;color:#1a7ad8;white-space:nowrap;transform:scaleX(0.964);transform-origin:0 0;;-webkit-text-stroke:0">Squelch: Off</div>
<svg class="a" style="left:251px;top:850px" width="7" height="4"><path d="M0 0H7L3.5 4Z" fill="#222"/></svg>
<div class="a" style="left:268px;top:146px;width:1612px;height:526px;background:linear-gradient(#070707 0%,#0c0c0c 40%,#1a1a1a 100%)"></div>
<div class="a" style="left:268px;top:146px;width:1.5px;height:526px;background:linear-gradient(#080808 0%,#3a3a3a 30%,#9a9a9a 60%,#a8a8a8 100%)"></div>
<svg class="a" style="left:0;top:0" width="1920" height="1048" viewBox="0 0 1920 1048"><path d="M321 172.5H1828" stroke="#6a6a6a" stroke-width="1" stroke-dasharray="1 3"/><path d="M321 207.5H1828" stroke="#6a6a6a" stroke-width="1" stroke-dasharray="1 3"/><path d="M321 241.5H1828" stroke="#6a6a6a" stroke-width="1" stroke-dasharray="1 3"/><path d="M321 275.5H1828" stroke="#6a6a6a" stroke-width="1" stroke-dasharray="1 3"/><path d="M321 310.5H1828" stroke="#6a6a6a" stroke-width="1" stroke-dasharray="1 3"/><path d="M321 344.5H1828" stroke="#6a6a6a" stroke-width="1" stroke-dasharray="1 3"/><path d="M321 378.5H1828" stroke="#6a6a6a" stroke-width="1" stroke-dasharray="1 3"/><path d="M321 412.5H1828" stroke="#6a6a6a" stroke-width="1" stroke-dasharray="1 3"/><path d="M321 447.5H1828" stroke="#6a6a6a" stroke-width="1" stroke-dasharray="1 3"/><path d="M321 481.5H1828" stroke="#6a6a6a" stroke-width="1" stroke-dasharray="1 3"/><path d="M321 515.5H1828" stroke="#6a6a6a" stroke-width="1" stroke-dasharray="1 3"/><path d="M321 550.5H1828" stroke="#6a6a6a" stroke-width="1" stroke-dasharray="1 3"/><path d="M321 584.5H1828" stroke="#6a6a6a" stroke-width="1" stroke-dasharray="1 3"/><path d="M321 618.5H1828" stroke="#6a6a6a" stroke-width="1" stroke-dasharray="1 3"/><path d="M321 652.5H1828" stroke="#6a6a6a" stroke-width="1" stroke-dasharray="1 3"/></svg>
<div class="a s" style="left:272.5px;top:167.53px;font-weight:normal;font-size:10px;line-height:12px;color:#dcdcdc;white-space:nowrap;transform:scaleX(0.979);transform-origin:0 0;;-webkit-text-stroke:0">-10 dBm</div>
<div class="a s" style="left:1837.7px;top:167.53px;font-weight:normal;font-size:10px;line-height:12px;color:#dcdcdc;white-space:nowrap;transform:scaleX(1.019);transform-origin:0 0;;-webkit-text-stroke:0">-10 dBm</div>
<div class="a s" style="left:272.5px;top:201.82px;font-weight:normal;font-size:10px;line-height:12px;color:#dcdcdc;white-space:nowrap;transform:scaleX(0.979);transform-origin:0 0;;-webkit-text-stroke:0">-15 dBm</div>
<div class="a s" style="left:1837.7px;top:201.82px;font-weight:normal;font-size:10px;line-height:12px;color:#dcdcdc;white-space:nowrap;transform:scaleX(1.019);transform-origin:0 0;;-webkit-text-stroke:0">-15 dBm</div>
<div class="a s" style="left:272.5px;top:236.11px;font-weight:normal;font-size:10px;line-height:12px;color:#dcdcdc;white-space:nowrap;transform:scaleX(0.979);transform-origin:0 0;;-webkit-text-stroke:0">-20 dBm</div>
<div class="a s" style="left:1837.7px;top:236.11px;font-weight:normal;font-size:10px;line-height:12px;color:#dcdcdc;white-space:nowrap;transform:scaleX(1.019);transform-origin:0 0;;-webkit-text-stroke:0">-20 dBm</div>
<div class="a s" style="left:272.5px;top:270.40px;font-weight:normal;font-size:10px;line-height:12px;color:#dcdcdc;white-space:nowrap;transform:scaleX(0.979);transform-origin:0 0;;-webkit-text-stroke:0">-25 dBm</div>
<div class="a s" style="left:1837.7px;top:270.40px;font-weight:normal;font-size:10px;line-height:12px;color:#dcdcdc;white-space:nowrap;transform:scaleX(1.019);transform-origin:0 0;;-webkit-text-stroke:0">-25 dBm</div>
<div class="a s" style="left:272.5px;top:304.69px;font-weight:normal;font-size:10px;line-height:12px;color:#dcdcdc;white-space:nowrap;transform:scaleX(0.979);transform-origin:0 0;;-webkit-text-stroke:0">-30 dBm</div>
<div class="a s" style="left:1837.7px;top:304.69px;font-weight:normal;font-size:10px;line-height:12px;color:#dcdcdc;white-space:nowrap;transform:scaleX(1.019);transform-origin:0 0;;-webkit-text-stroke:0">-30 dBm</div>
<div class="a s" style="left:272.5px;top:338.98px;font-weight:normal;font-size:10px;line-height:12px;color:#dcdcdc;white-space:nowrap;transform:scaleX(0.979);transform-origin:0 0;;-webkit-text-stroke:0">-35 dBm</div>
<div class="a s" style="left:1837.7px;top:338.98px;font-weight:normal;font-size:10px;line-height:12px;color:#dcdcdc;white-space:nowrap;transform:scaleX(1.019);transform-origin:0 0;;-webkit-text-stroke:0">-35 dBm</div>
<div class="a s" style="left:272.5px;top:373.27px;font-weight:normal;font-size:10px;line-height:12px;color:#dcdcdc;white-space:nowrap;transform:scaleX(0.979);transform-origin:0 0;;-webkit-text-stroke:0">-40 dBm</div>
<div class="a s" style="left:1837.7px;top:373.27px;font-weight:normal;font-size:10px;line-height:12px;color:#dcdcdc;white-space:nowrap;transform:scaleX(1.019);transform-origin:0 0;;-webkit-text-stroke:0">-40 dBm</div>
<div class="a s" style="left:272.5px;top:407.56px;font-weight:normal;font-size:10px;line-height:12px;color:#dcdcdc;white-space:nowrap;transform:scaleX(0.979);transform-origin:0 0;;-webkit-text-stroke:0">-45 dBm</div>
<div class="a s" style="left:1837.7px;top:407.56px;font-weight:normal;font-size:10px;line-height:12px;color:#dcdcdc;white-space:nowrap;transform:scaleX(1.019);transform-origin:0 0;;-webkit-text-stroke:0">-45 dBm</div>
<div class="a s" style="left:272.5px;top:441.85px;font-weight:normal;font-size:10px;line-height:12px;color:#dcdcdc;white-space:nowrap;transform:scaleX(0.979);transform-origin:0 0;;-webkit-text-stroke:0">-50 dBm</div>
<div class="a s" style="left:1837.7px;top:441.85px;font-weight:normal;font-size:10px;line-height:12px;color:#dcdcdc;white-space:nowrap;transform:scaleX(1.019);transform-origin:0 0;;-webkit-text-stroke:0">-50 dBm</div>
<div class="a s" style="left:272.5px;top:476.14px;font-weight:normal;font-size:10px;line-height:12px;color:#dcdcdc;white-space:nowrap;transform:scaleX(0.979);transform-origin:0 0;;-webkit-text-stroke:0">-55 dBm</div>
<div class="a s" style="left:1837.7px;top:476.14px;font-weight:normal;font-size:10px;line-height:12px;color:#dcdcdc;white-space:nowrap;transform:scaleX(1.019);transform-origin:0 0;;-webkit-text-stroke:0">-55 dBm</div>
<div class="a s" style="left:272.5px;top:510.43px;font-weight:normal;font-size:10px;line-height:12px;color:#dcdcdc;white-space:nowrap;transform:scaleX(0.979);transform-origin:0 0;;-webkit-text-stroke:0">-60 dBm</div>
<div class="a s" style="left:1837.7px;top:510.43px;font-weight:normal;font-size:10px;line-height:12px;color:#dcdcdc;white-space:nowrap;transform:scaleX(1.019);transform-origin:0 0;;-webkit-text-stroke:0">-60 dBm</div>
<div class="a s" style="left:272.5px;top:544.72px;font-weight:normal;font-size:10px;line-height:12px;color:#dcdcdc;white-space:nowrap;transform:scaleX(0.979);transform-origin:0 0;;-webkit-text-stroke:0">-65 dBm</div>
<div class="a s" style="left:1837.7px;top:544.72px;font-weight:normal;font-size:10px;line-height:12px;color:#dcdcdc;white-space:nowrap;transform:scaleX(1.019);transform-origin:0 0;;-webkit-text-stroke:0">-65 dBm</div>
<div class="a s" style="left:272.5px;top:579.01px;font-weight:normal;font-size:10px;line-height:12px;color:#dcdcdc;white-space:nowrap;transform:scaleX(0.979);transform-origin:0 0;;-webkit-text-stroke:0">-70 dBm</div>
<div class="a s" style="left:1837.7px;top:579.01px;font-weight:normal;font-size:10px;line-height:12px;color:#dcdcdc;white-space:nowrap;transform:scaleX(1.019);transform-origin:0 0;;-webkit-text-stroke:0">-70 dBm</div>
<div class="a s" style="left:272.5px;top:613.30px;font-weight:normal;font-size:10px;line-height:12px;color:#dcdcdc;white-space:nowrap;transform:scaleX(0.979);transform-origin:0 0;;-webkit-text-stroke:0">-75 dBm</div>
<div class="a s" style="left:1837.7px;top:613.30px;font-weight:normal;font-size:10px;line-height:12px;color:#dcdcdc;white-space:nowrap;transform:scaleX(1.019);transform-origin:0 0;;-webkit-text-stroke:0">-75 dBm</div>
<div class="a s" style="left:272.5px;top:647.59px;font-weight:normal;font-size:10px;line-height:12px;color:#dcdcdc;white-space:nowrap;transform:scaleX(0.979);transform-origin:0 0;;-webkit-text-stroke:0">-80 dBm</div>
<div class="a s" style="left:1837.7px;top:647.59px;font-weight:normal;font-size:10px;line-height:12px;color:#dcdcdc;white-space:nowrap;transform:scaleX(1.019);transform-origin:0 0;;-webkit-text-stroke:0">-80 dBm</div>
<div class="a" style="left:1061px;top:148px;width:28px;height:523px;background:linear-gradient(#056605 0%,#066006 25%,#1a4a1a 58%,#2a302a 82%,#2c2c2c 100%);border-left:1px solid #3aa83a;border-right:1px solid #3aa83a"></div>
<div class="a" style="left:1061px;top:148px;width:28px;height:6px;background:linear-gradient(90deg,#12b012,#66f466 50%,#12b012)"></div>
<div class="a" style="left:1062px;top:183.5px;width:26px;height:1.5px;background:#2aa42a"></div>
<div class="a" style="left:1067px;top:157px;width:16px;height:16px;border-radius:3px;background:#004000"></div>
<svg class="a" style="left:1071px;top:161.5px" width="8" height="9" viewBox="0 0 8 9"><path d="M2.3 2 L4.6 0.8 V7.6" stroke="#f0f0f0" stroke-width="1.3" fill="none"/></svg>
<div class="a" style="left:1061px;top:665px;width:28px;height:7px;background:linear-gradient(#2ca02c,#58c058 50%,#2ca02c)"></div>
<svg class="a" style="left:0;top:0" width="1920" height="1048"><path d="M1061 172.5H1089" stroke="#8a8a8a" stroke-width="1" stroke-dasharray="1 3" opacity=".5"/><path d="M1061 207.5H1089" stroke="#8a8a8a" stroke-width="1" stroke-dasharray="1 3" opacity=".5"/><path d="M1061 241.5H1089" stroke="#8a8a8a" stroke-width="1" stroke-dasharray="1 3" opacity=".5"/><path d="M1061 275.5H1089" stroke="#8a8a8a" stroke-width="1" stroke-dasharray="1 3" opacity=".5"/><path d="M1061 310.5H1089" stroke="#8a8a8a" stroke-width="1" stroke-dasharray="1 3" opacity=".5"/><path d="M1061 344.5H1089" stroke="#8a8a8a" stroke-width="1" stroke-dasharray="1 3" opacity=".5"/><path d="M1061 378.5H1089" stroke="#8a8a8a" stroke-width="1" stroke-dasharray="1 3" opacity=".5"/><path d="M1061 412.5H1089" stroke="#8a8a8a" stroke-width="1" stroke-dasharray="1 3" opacity=".5"/><path d="M1061 447.5H1089" stroke="#8a8a8a" stroke-width="1" stroke-dasharray="1 3" opacity=".5"/><path d="M1061 481.5H1089" stroke="#8a8a8a" stroke-width="1" stroke-dasharray="1 3" opacity=".5"/><path d="M1061 515.5H1089" stroke="#8a8a8a" stroke-width="1" stroke-dasharray="1 3" opacity=".5"/><path d="M1061 550.5H1089" stroke="#8a8a8a" stroke-width="1" stroke-dasharray="1 3" opacity=".5"/><path d="M1061 584.5H1089" stroke="#8a8a8a" stroke-width="1" stroke-dasharray="1 3" opacity=".5"/><path d="M1061 618.5H1089" stroke="#8a8a8a" stroke-width="1" stroke-dasharray="1 3" opacity=".5"/><path d="M1061 652.5H1089" stroke="#8a8a8a" stroke-width="1" stroke-dasharray="1 3" opacity=".5"/></svg>
<svg class="a" style="left:0;top:0" width="1920" height="1048"><path d="M269.0 626.1 L270.2 634.2 L271.6 624.2 L273.0 614.8 L274.3 620.9 L275.2 620.2 L276.7 628.1 L277.9 593.8 L279.2 621.9 L280.7 620.9 L282.1 630.1 L283.7 628.3 L284.7 623.8 L285.6 623.7 L286.6 634.6 L287.5 634.9 L288.5 629.7 L289.5 618.2 L291.1 622.0 L292.1 626.5 L293.4 622.2 L294.6 633.5 L296.1 622.2 L297.0 630.1 L297.9 611.9 L298.9 629.3 L300.3 613.5 L301.6 609.6 L302.8 615.4 L303.7 605.7 L305.0 612.0 L306.4 623.5 L307.8 592.6 L309.1 633.5 L310.7 614.3 L311.8 644.5 L312.9 635.0 L314.5 636.3 L315.8 622.8 L316.6 638.5 L317.8 661.2 L319.1 628.5 L320.3 637.6 L321.4 650.5 L322.7 625.1 L324.2 654.9 L325.3 624.3 L326.5 615.2 L327.4 597.6 L328.5 629.1 L329.3 632.8 L330.6 625.0 L332.1 636.1 L332.9 630.8 L334.0 645.3 L335.1 652.9 L336.5 621.8 L337.6 642.6 L338.8 639.9 L340.1 640.9 L341.7 641.8 L343.2 634.1 L344.6 637.0 L346.0 627.4 L346.9 640.1 L348.5 642.3 L349.7 627.5 L351.2 646.8 L352.7 622.4 L354.0 627.3 L354.8 637.6 L356.0 637.4 L357.2 638.2 L358.1 628.3 L359.1 621.0 L360.6 630.8 L361.6 622.5 L362.5 635.2 L363.7 628.6 L364.6 647.9 L365.9 641.2 L367.4 627.7 L369.0 637.4 L370.0 618.9 L370.9 606.6 L372.5 631.8 L373.7 637.1 L374.5 637.4 L375.5 613.4 L376.3 616.6 L377.4 626.3 L378.2 648.3 L379.6 627.4 L380.4 638.5 L381.7 622.4 L383.2 608.2 L384.6 622.2 L386.0 643.3 L387.1 632.8 L388.4 608.1 L389.7 639.4 L391.0 661.2 L392.4 624.2 L393.5 627.8 L394.7 631.4 L396.2 619.6 L397.7 614.9 L399.0 610.6 L400.3 615.0 L401.3 612.2 L402.2 632.2 L403.1 618.6 L404.2 620.4 L405.8 635.8 L407.1 613.2 L407.9 624.9 L409.1 611.4 L410.3 619.1 L411.2 627.0 L412.2 630.0 L413.6 611.2 L415.1 617.2 L416.4 609.0 L417.7 624.9 L418.7 609.5 L419.6 635.2 L420.7 604.8 L422.3 613.4 L423.5 622.2 L424.3 632.6 L425.8 623.4 L426.8 642.3 L427.9 636.9 L429.2 634.0 L430.6 615.4 L432.1 614.4 L433.2 621.0 L434.5 634.7 L436.0 622.1 L437.2 624.0 L438.5 625.2 L440.0 611.6 L441.3 612.3 L442.7 616.1 L443.9 629.5 L445.0 637.3 L446.5 635.9 L447.9 629.4 L449.3 618.4 L450.4 594.8 L451.3 637.0 L452.5 623.5 L453.4 611.9 L454.4 621.9 L455.6 637.0 L457.1 617.9 L458.1 615.3 L459.3 625.7 L460.3 621.6 L461.7 627.4 L462.7 630.9 L463.7 643.8 L465.2 627.4 L466.1 625.2 L467.6 611.4 L468.4 633.2 L469.4 633.6 L470.4 626.7 L471.3 624.9 L472.6 628.3 L473.9 628.8 L474.8 636.0 L475.9 623.0 L476.8 640.2 L478.2 617.0 L479.1 648.4 L480.6 637.0 L481.5 632.7 L482.7 650.2 L483.7 635.3 L485.3 661.2 L486.4 638.5 L487.8 644.7 L489.3 637.0 L490.7 631.7 L491.7 632.0 L492.7 637.6 L493.8 630.3 L495.3 637.5 L496.8 629.9 L498.3 609.5 L499.7 617.1 L500.7 624.8 L502.0 633.1 L502.8 612.2 L504.1 611.1 L505.1 624.8 L506.7 631.7 L508.1 641.7 L509.5 631.8 L511.1 628.8 L512.1 617.8 L513.4 632.0 L514.3 622.6 L515.7 629.4 L516.6 614.2 L518.1 618.9 L519.4 629.1 L520.6 626.6 L521.7 613.7 L522.8 595.3 L524.0 628.1 L525.0 623.3 L526.1 614.8 L527.0 622.6 L527.9 627.4 L529.3 605.6 L530.2 609.1 L531.1 603.3 L532.4 625.1 L534.0 625.0 L535.6 617.1 L536.8 615.0 L537.9 630.1 L538.8 613.4 L539.9 620.5 L541.2 607.4 L542.4 629.7 L543.4 623.6 L544.5 635.2 L545.7 605.2 L547.0 632.1 L547.9 615.9 L548.9 621.4 L550.2 625.1 L551.0 607.3 L552.3 607.1 L553.2 636.7 L554.3 615.8 L555.5 650.0 L556.9 617.9 L558.0 611.1 L559.6 637.3 L560.9 610.4 L561.9 599.6 L562.8 608.6 L564.3 621.8 L565.7 614.9 L566.7 617.0 L567.8 620.9 L568.9 610.8 L569.7 610.4 L571.1 609.2 L572.2 648.3 L573.3 604.9 L574.5 610.5 L575.4 616.8 L576.7 602.1 L578.0 608.5 L579.1 605.5 L580.2 591.8 L581.7 619.0 L582.6 633.5 L583.6 624.2 L584.5 617.2 L585.4 619.1 L586.4 618.9 L587.7 651.4 L588.7 619.1 L590.0 637.5 L591.5 630.3 L592.7 648.0 L594.3 644.7 L595.4 612.8 L596.9 628.4 L598.0 628.9 L599.3 627.5 L600.3 630.8 L601.6 650.8 L603.1 614.8 L604.7 633.7 L605.9 623.7 L606.9 620.6 L607.8 627.0 L608.7 627.1 L610.2 633.7 L611.6 624.0 L612.7 620.9 L613.9 630.5 L615.4 628.6 L616.3 630.5 L617.2 641.8 L618.8 631.2 L619.6 615.8 L620.7 626.1 L621.7 644.7 L623.0 653.9 L624.3 631.0 L625.8 614.3 L626.6 629.4 L627.6 628.3 L628.5 632.9 L629.6 626.0 L630.8 634.5 L632.1 632.3 L633.7 624.4 L634.5 625.7 L635.9 602.4 L636.7 637.9 L637.8 650.3 L638.7 633.0 L640.3 624.7 L641.4 644.2 L642.4 608.6 L643.5 636.5 L644.8 624.7 L646.0 625.3 L647.2 626.5 L648.6 600.6 L649.6 614.4 L650.9 624.1 L652.5 608.3 L653.5 637.8 L654.7 627.3 L655.9 635.6 L657.2 610.1 L658.4 646.6 L660.0 641.9 L661.1 635.8 L662.1 641.8 L663.6 639.4 L664.9 618.2 L666.4 627.3 L667.7 644.8 L669.2 645.1 L670.1 609.9 L671.5 627.1 L672.8 632.5 L674.1 638.4 L675.3 624.1 L676.3 637.3 L677.7 628.1 L679.0 624.9 L680.3 624.5 L681.6 626.3 L682.9 635.3 L684.1 613.0 L685.5 631.1 L686.7 636.4 L687.9 637.1 L688.9 632.5 L690.0 621.5 L691.3 619.7 L692.4 646.8 L693.9 626.4 L695.1 616.2 L696.7 627.6 L698.0 626.3 L699.4 595.3 L700.3 618.1 L701.6 642.3 L703.0 654.4 L704.5 631.0 L705.8 614.9 L706.7 629.6 L707.7 634.4 L708.7 626.2 L709.6 633.6 L710.7 645.2 L711.5 614.3 L712.4 630.2 L714.0 647.5 L714.8 627.3 L716.0 651.6 L717.2 637.6 L718.2 625.5 L719.4 632.5 L720.6 638.2 L721.7 625.2 L722.9 648.3 L724.5 624.2 L725.8 640.0 L727.2 632.3 L728.6 628.5 L729.9 616.0 L731.0 644.4 L732.4 621.1 L733.7 616.6 L734.5 630.9 L736.1 609.5 L737.2 617.1 L738.5 617.8 L739.8 616.4 L741.0 622.0 L742.5 601.8 L743.6 609.0 L745.0 612.0 L745.9 628.3 L747.0 634.0 L748.5 619.2 L749.5 636.6 L750.8 626.0 L752.2 626.7 L753.7 631.5 L754.6 591.9 L755.8 630.7 L757.3 621.5 L758.5 635.3 L760.0 635.4 L761.4 610.5 L762.4 624.7 L763.4 616.1 L764.4 630.7 L765.9 639.6 L767.2 636.0 L768.8 617.1 L769.9 654.5 L771.0 605.7 L772.3 615.6 L773.2 623.7 L774.5 621.8 L775.9 634.3 L777.1 608.7 L778.0 631.1 L779.2 637.1 L780.3 616.2 L781.8 649.3 L783.1 639.1 L784.0 620.0 L785.5 631.1 L786.8 653.7 L788.2 632.5 L789.3 623.7 L790.5 614.4 L792.0 621.5 L793.4 621.1 L794.6 607.2 L795.7 615.3 L796.9 617.6 L798.0 624.0 L799.6 621.2 L800.7 633.7 L802.1 603.8 L803.0 630.4 L804.5 629.3 L805.9 626.3 L807.4 649.2 L808.3 602.9 L809.4 621.7 L810.6 630.7 L812.2 622.5 L813.6 628.9 L814.8 608.0 L816.1 632.7 L817.7 617.2 L818.6 616.7 L820.0 622.7 L820.9 620.6 L822.0 624.5 L823.5 634.1 L824.5 631.1 L826.0 615.7 L827.0 633.4 L828.5 622.1 L829.8 631.6 L830.6 633.3 L831.7 624.3 L833.3 620.2 L834.3 644.0 L835.5 625.4 L836.7 613.4 L837.7 612.1 L839.2 648.2 L840.6 613.2 L842.2 624.8 L843.5 634.0 L844.8 599.0 L845.7 634.8 L846.6 623.3 L848.1 627.4 L849.3 598.0 L850.2 637.6 L851.3 617.6 L852.9 607.0 L854.4 648.7 L855.4 606.9 L856.6 640.8 L857.6 629.8 L858.8 633.9 L859.8 631.1 L861.2 646.9 L862.7 621.3 L863.6 636.5 L864.7 649.1 L866.0 644.1 L867.2 634.0 L868.2 639.0 L869.4 639.0 L870.7 620.6 L871.9 623.9 L872.8 625.6 L873.8 619.9 L875.3 623.0 L876.3 636.9 L877.5 621.7 L878.5 634.9 L879.7 613.0 L880.8 644.1 L882.4 643.8 L883.4 643.0 L884.7 626.9 L886.0 617.6 L887.5 619.6 L888.7 636.3 L889.9 612.3 L891.5 611.9 L893.1 612.9 L894.0 644.2 L895.4 627.6 L896.7 627.6 L898.1 621.3 L899.5 621.2 L900.4 618.8 L901.9 630.4 L902.7 641.9 L904.1 618.7 L905.4 631.5 L906.6 614.4 L907.9 623.4 L908.8 623.0 L910.3 625.9 L911.7 597.9 L912.8 602.5 L913.6 627.7 L914.4 599.3 L915.3 621.0 L916.3 637.7 L917.3 630.2 L918.4 625.0 L919.4 610.7 L920.4 631.3 L921.8 623.5 L923.0 628.9 L923.9 596.1 L925.0 604.4 L926.3 634.4 L927.8 619.6 L928.8 618.4 L930.3 627.5 L931.1 615.1 L932.4 624.9 L933.6 610.4 L934.6 619.5 L935.9 621.4 L936.8 631.3 L937.7 629.8 L939.1 622.7 L940.0 621.4 L941.1 604.5 L942.4 623.9 L943.8 607.4 L945.4 615.3 L946.3 616.2 L947.6 621.6 L949.0 620.9 L950.2 620.3 L951.3 608.9 L952.5 624.2 L953.4 628.6 L954.4 625.5 L955.8 632.5 L956.7 628.0 L957.6 618.4 L958.4 617.4 L959.4 628.6 L960.5 611.9 L961.7 616.1 L962.5 626.2 L964.0 609.6 L965.4 618.6 L966.8 632.1 L967.9 628.9 L969.3 621.8 L970.8 629.9 L972.1 620.8 L973.1 623.4 L974.1 625.7 L975.7 612.8 L977.2 619.9 L978.0 615.9 L978.8 630.7 L980.3 625.7 L981.4 633.3 L982.8 622.4 L983.6 619.5 L985.0 623.0 L986.1 634.5 L987.2 603.9 L988.1 621.8 L989.2 608.5 L990.4 633.2 L991.4 652.3 L992.4 632.9 L993.3 638.1 L994.4 628.1 L995.9 632.4 L997.5 627.7 L998.4 620.4 L999.6 620.1 L1000.4 634.5 L1001.9 630.6 L1003.1 629.6 L1004.0 607.1 L1005.5 633.4 L1006.7 607.5 L1007.5 634.4 L1008.9 607.8 L1010.2 622.2 L1011.2 600.6 L1012.3 632.3 L1013.2 599.5 L1014.3 613.1 L1015.2 632.2 L1016.5 633.9 L1017.6 613.2 L1018.7 631.2 L1019.8 624.4 L1021.2 621.4 L1022.1 637.4 L1023.5 601.0 L1024.5 612.1 L1025.3 639.1 L1026.2 628.4 L1027.5 620.0 L1029.1 608.9 L1030.0 629.9 L1030.9 624.1 L1032.4 627.8 L1033.8 629.3 L1035.0 640.1 L1036.5 621.2 L1038.0 615.5 L1039.1 634.0 L1039.9 627.6 L1040.9 639.2 L1042.1 614.7 L1043.0 619.4 L1043.8 621.6 L1045.2 620.0 L1046.8 614.5 L1048.3 623.8 L1049.3 633.5 L1050.5 621.6 L1051.8 613.8 L1053.0 623.7 L1054.5 627.6 L1055.6 613.4 L1056.5 622.4 L1057.9 627.5 L1059.3 632.3 L1060.5 631.1 L1061.7 624.4 L1062.7 623.5 L1064.2 626.1 L1065.4 616.2 L1066.9 633.4 L1068.3 618.3 L1069.5 629.7 L1070.3 635.8 L1071.3 623.2 L1072.1 626.2 L1073.3 627.3 L1074.5 628.8 L1075.9 644.5 L1077.1 632.2 L1078.6 620.2 L1080.1 619.6 L1081.1 626.7 L1082.4 589.6 L1083.9 634.1 L1085.3 612.4 L1086.5 618.1 L1087.4 621.6 L1088.5 620.8 L1090.0 631.1 L1091.0 622.2 L1092.6 624.2 L1094.0 628.2 L1095.4 629.0 L1097.0 636.1 L1098.2 613.6 L1099.5 600.8 L1101.1 624.1 L1102.6 620.3 L1104.0 617.6 L1105.5 617.3 L1106.9 609.2 L1108.3 629.9 L1109.6 602.0 L1110.6 611.0 L1111.9 614.2 L1113.2 611.8 L1114.1 641.7 L1115.5 622.5 L1116.3 630.6 L1117.4 616.6 L1118.7 629.2 L1120.2 615.8 L1121.8 614.1 L1122.9 617.5 L1124.3 601.5 L1125.3 622.1 L1126.5 626.2 L1127.6 608.3 L1128.8 635.7 L1130.2 645.2 L1131.5 632.3 L1132.7 596.1 L1134.0 617.3 L1135.1 645.7 L1136.6 608.7 L1137.5 608.3 L1138.7 618.4 L1140.2 595.8 L1141.4 625.8 L1142.7 606.6 L1144.0 614.3 L1145.4 588.7 L1147.0 626.6 L1148.2 646.4 L1149.2 626.8 L1150.3 629.2 L1151.2 620.8 L1152.6 608.2 L1153.6 598.4 L1154.8 615.4 L1155.8 608.9 L1156.9 604.4 L1157.8 617.1 L1158.8 623.1 L1159.6 624.2 L1161.0 613.8 L1162.2 609.6 L1163.1 621.9 L1164.7 599.3 L1165.5 610.8 L1166.7 602.8 L1167.9 630.1 L1169.0 577.5 L1170.4 619.8 L1171.9 612.4 L1173.1 620.5 L1174.6 640.7 L1175.9 611.6 L1176.8 620.5 L1178.0 632.8 L1179.1 608.8 L1180.0 615.6 L1181.2 600.3 L1182.4 607.6 L1183.7 618.2 L1185.2 618.4 L1186.5 607.1 L1187.3 612.5 L1188.1 621.7 L1189.5 606.2 L1190.5 628.7 L1192.1 623.8 L1193.0 614.0 L1194.4 602.7 L1195.9 631.0 L1197.5 626.8 L1198.7 604.1 L1199.0 635.0 L1201.0 560.0 L1203.5 500.0 L1204.8 482.4 L1206.0 475.4 L1207.3 477.4 L1208.6 474.4 L1209.9 482.4 L1212.3 528.6 L1213.3 540.6 L1214.3 526.6 L1218.4 467.6 L1219.6 460.6 L1220.9 462.6 L1222.2 459.6 L1223.5 467.6 L1225.9 506.5 L1226.9 518.5 L1227.9 504.5 L1231.6 447.6 L1232.8 440.6 L1234.1 442.6 L1235.4 439.6 L1236.7 447.6 L1239.1 495.3 L1240.1 507.3 L1241.1 493.3 L1244.8 433.1 L1246.0 426.1 L1247.3 428.1 L1248.6 425.1 L1249.9 433.1 L1252.3 475.2 L1253.3 487.2 L1254.3 473.2 L1257.6 413.1 L1258.8 406.1 L1260.1 408.1 L1261.4 405.1 L1262.7 413.1 L1265.1 462.4 L1266.1 474.4 L1267.1 460.4 L1270.8 399.1 L1272.0 392.1 L1273.3 394.1 L1274.6 391.1 L1275.9 399.1 L1278.4 447.2 L1279.4 459.2 L1280.4 445.2 L1283.7 378.2 L1284.9 371.2 L1286.2 373.2 L1287.5 370.2 L1288.8 378.2 L1291.2 425.6 L1292.2 437.6 L1293.2 423.6 L1296.9 365.0 L1298.1 358.0 L1299.4 360.0 L1300.7 357.0 L1302.0 365.0 L1304.4 412.3 L1305.4 424.3 L1306.4 410.3 L1309.7 343.4 L1310.9 336.4 L1312.2 338.4 L1313.5 335.4 L1314.8 343.4 L1317.2 390.3 L1318.2 402.3 L1319.2 388.3 L1322.9 330.9 L1324.1 323.9 L1325.4 325.9 L1326.7 322.9 L1328.0 330.9 L1331.2 370.2 L1332.2 382.2 L1333.2 368.2 L1335.7 309.3 L1336.9 302.3 L1338.2 304.3 L1339.5 301.3 L1340.8 309.3 L1344.4 358.2 L1345.4 370.2 L1346.4 356.2 L1349.7 296.1 L1350.9 289.1 L1352.2 291.1 L1353.5 288.1 L1354.8 296.1 L1357.3 352.2 L1358.3 364.2 L1359.3 350.2 L1363.0 296.1 L1364.2 289.1 L1365.5 291.1 L1366.8 288.1 L1368.1 296.1 L1370.5 352.2 L1371.5 364.2 L1372.5 350.2 L1375.8 296.1 L1377.0 289.1 L1378.3 291.1 L1379.6 288.1 L1380.9 296.1 L1381.0 300.0 L1384.0 345.0 L1387.0 420.0 L1389.0 448.0 L1390.5 432.0 L1393.0 425.0 L1395.0 432.0 L1396.0 446.0 L1400.0 560.0 L1402.0 585.0 L1403.0 570.0 L1405.0 563.0 L1407.0 575.0 L1409.0 600.0 L1411.0 618.0 L1412.0 609.6 L1413.2 616.9 L1414.5 619.9 L1416.0 618.6 L1417.2 598.7 L1418.2 608.4 L1419.1 627.7 L1420.4 607.6 L1421.8 637.9 L1423.2 615.1 L1424.6 599.2 L1426.2 646.7 L1427.6 638.1 L1428.8 637.5 L1429.7 643.1 L1430.9 616.9 L1432.4 611.0 L1434.0 579.8 L1435.2 630.9 L1436.3 625.2 L1437.6 633.7 L1438.8 608.8 L1440.2 622.6 L1441.3 619.6 L1442.5 641.6 L1443.7 618.5 L1445.1 605.2 L1446.2 619.6 L1447.5 628.0 L1448.3 624.8 L1449.5 631.1 L1450.5 623.7 L1451.8 629.8 L1453.0 603.2 L1454.2 624.7 L1455.2 605.6 L1456.5 628.8 L1458.1 619.8 L1459.4 620.9 L1460.4 605.8 L1461.7 619.8 L1463.1 632.1 L1464.0 607.1 L1465.0 617.4 L1466.2 625.5 L1467.5 618.5 L1468.6 582.6 L1469.5 623.6 L1470.8 613.4 L1472.0 610.6 L1473.6 619.8 L1474.5 587.2 L1475.6 616.4 L1477.0 613.4 L1478.0 622.1 L1478.9 617.1 L1480.1 631.6 L1481.6 630.7 L1483.0 639.1 L1484.3 613.2 L1485.4 617.9 L1486.5 617.0 L1487.9 644.0 L1489.1 624.2 L1490.2 648.4 L1491.4 630.7 L1492.8 626.6 L1493.9 630.2 L1494.8 625.6 L1496.2 611.7 L1497.1 634.8 L1498.6 641.1 L1499.7 635.2 L1500.5 631.4 L1501.8 635.2 L1503.0 616.3 L1503.9 621.5 L1505.4 635.3 L1506.5 630.8 L1507.4 630.3 L1508.5 620.8 L1509.9 614.8 L1511.4 646.4 L1512.6 630.4 L1513.9 622.9 L1515.1 633.5 L1516.0 630.4 L1517.1 602.3 L1518.3 648.7 L1519.7 630.7 L1520.5 621.8 L1521.4 623.9 L1522.3 629.7 L1523.3 636.3 L1524.1 632.3 L1525.3 626.0 L1526.8 621.4 L1528.0 607.2 L1528.8 615.5 L1529.9 631.5 L1530.7 618.2 L1531.9 621.1 L1533.1 625.5 L1534.4 607.2 L1535.2 602.7 L1536.8 632.0 L1537.9 592.9 L1539.2 644.7 L1540.0 647.1 L1541.2 625.3 L1542.5 621.5 L1543.4 624.9 L1544.3 616.7 L1545.7 630.4 L1546.8 626.9 L1548.2 617.4 L1549.5 607.0 L1550.8 621.9 L1551.7 614.3 L1552.7 603.8 L1553.6 615.2 L1555.2 611.7 L1556.2 600.5 L1557.5 598.7 L1558.9 615.3 L1560.2 627.4 L1561.7 595.8 L1563.3 623.4 L1564.6 617.0 L1566.0 624.5 L1567.4 634.5 L1568.6 618.2 L1569.4 615.4 L1570.3 625.3 L1571.2 622.1 L1572.2 629.2 L1573.5 642.3 L1575.1 632.8 L1576.0 619.1 L1577.5 633.4 L1578.3 625.6 L1579.5 628.8 L1580.6 620.3 L1582.0 616.0 L1583.5 621.8 L1584.7 629.3 L1585.6 608.5 L1586.5 619.3 L1587.5 624.9 L1588.4 627.6 L1589.2 616.5 L1590.2 620.8 L1591.1 624.8 L1592.1 627.3 L1593.1 611.3 L1594.1 623.3 L1595.0 612.5 L1596.0 603.8 L1597.4 629.1 L1598.7 634.6 L1599.6 617.7 L1601.2 612.1 L1602.3 630.5 L1603.4 596.1 L1604.9 608.0 L1606.3 617.2 L1607.6 610.4 L1609.2 637.7 L1610.7 633.6 L1612.3 619.5 L1613.6 625.8 L1614.7 636.3 L1616.3 615.5 L1617.5 631.4 L1619.0 647.2 L1620.0 612.0 L1621.1 636.8 L1622.7 607.0 L1624.1 613.4 L1625.7 611.0 L1627.0 614.7 L1628.3 614.9 L1629.8 609.6 L1631.0 620.1 L1632.4 610.2 L1633.2 642.7 L1634.4 635.3 L1635.4 634.2 L1636.4 622.9 L1637.7 627.8 L1639.0 612.2 L1640.6 626.5 L1641.8 628.3 L1642.7 612.3 L1644.1 612.2 L1645.0 611.4 L1646.5 615.2 L1647.6 616.3 L1648.7 631.8 L1649.9 625.7 L1650.9 616.8 L1651.9 616.2 L1653.4 616.6 L1654.9 621.8 L1656.0 616.6 L1657.0 612.3 L1658.1 610.5 L1659.5 600.6 L1660.5 615.5 L1662.1 625.5 L1662.9 593.1 L1664.3 608.7 L1665.5 614.9 L1666.6 620.2 L1667.4 615.5 L1668.6 611.7 L1669.5 612.2 L1670.7 628.5 L1672.1 603.4 L1673.6 617.1 L1674.7 628.6 L1675.7 628.1 L1677.0 591.1 L1678.4 606.1 L1679.7 627.2 L1681.2 606.5 L1682.6 612.4 L1684.0 616.5 L1684.9 616.6 L1686.1 594.1 L1687.1 607.3 L1688.3 605.5 L1689.7 610.1 L1691.1 608.8 L1692.5 607.5 L1693.8 605.0 L1694.8 606.6 L1695.6 638.1 L1697.1 628.7 L1698.7 635.2 L1699.7 609.8 L1701.3 621.9 L1702.8 622.5 L1704.2 611.2 L1705.1 608.6 L1706.7 641.4 L1707.8 624.4 L1708.7 621.6 L1710.0 651.3 L1710.8 624.1 L1711.8 623.5 L1713.3 631.2 L1714.6 623.9 L1716.0 622.6 L1717.5 625.6 L1718.7 611.8 L1719.9 617.2 L1721.4 604.7 L1722.2 600.2 L1723.6 629.7 L1724.8 627.4 L1726.0 631.1 L1727.5 592.0 L1728.4 624.6 L1729.7 617.0 L1731.2 614.2 L1732.7 612.0 L1733.8 634.6 L1735.4 605.3 L1736.8 604.7 L1738.3 621.1 L1739.8 626.0 L1741.2 624.1 L1742.3 629.6 L1743.8 630.7 L1745.4 615.0 L1746.5 639.5 L1747.8 641.5 L1748.9 645.4 L1749.9 629.2 L1751.3 633.4 L1752.2 619.8 L1753.4 619.6 L1754.6 626.8 L1755.4 628.3 L1756.8 627.7 L1757.7 630.6 L1758.7 646.4 L1759.8 631.5 L1760.9 615.4 L1762.5 622.9 L1763.9 637.5 L1764.9 622.4 L1766.3 635.1 L1767.8 609.1 L1769.2 623.9 L1770.7 635.4 L1772.1 618.6 L1773.0 618.3 L1774.5 638.5 L1775.6 633.4 L1777.1 613.7 L1778.4 618.1 L1779.6 627.4 L1781.0 634.6 L1781.9 623.5 L1782.9 629.5 L1783.9 638.0 L1785.4 628.5 L1786.3 635.9 L1787.9 611.0 L1789.0 631.0 L1790.1 622.3 L1791.3 640.8 L1792.3 634.3 L1793.4 611.3 L1794.7 620.3 L1796.1 642.7 L1797.4 610.9 L1798.3 620.3 L1799.7 639.6 L1800.6 636.3 L1802.1 619.1 L1803.2 627.6 L1804.2 616.6 L1805.4 650.8 L1806.6 594.7 L1807.7 602.3 L1809.1 627.1 L1810.1 626.1 L1811.6 634.5 L1812.9 623.4 L1813.9 636.4 L1815.4 620.9 L1816.6 624.5 L1817.9 635.1 L1819.1 616.4 L1819.9 628.0 L1821.5 628.7 L1822.7 635.4 L1823.9 625.0 L1824.9 600.8 L1826.5 623.2 L1827.8 595.7 L1829.2 616.7 L1830.2 637.1 L1831.5 645.3 L1833.0 632.3 L1834.2 649.3 L1835.2 634.1 L1836.6 632.9 L1838.2 612.7 L1839.1 617.1 L1840.6 645.6 L1842.1 625.9 L1843.5 637.4 L1844.8 616.0 L1845.8 631.4 L1847.2 628.6 L1848.1 625.8 L1849.7 619.3 L1850.9 618.3 L1852.1 636.0 L1853.2 630.0 L1854.3 634.0 L1855.4 622.2 L1856.9 615.6 L1857.7 608.0 L1858.7 628.0 L1859.8 621.4 L1861.0 628.1 L1862.3 599.4 L1863.7 634.7 L1865.0 629.6 L1866.2 632.9 L1867.6 629.9 L1868.7 611.0 L1869.6 617.1 L1871.0 649.0 L1872.4 623.7 L1873.7 621.1 L1874.9 626.9 L1875.9 618.6 L1877.1 616.8 L1878.6 634.4 L1879.0 611.8" stroke="#dcdcdc" stroke-width="1.05" fill="none" stroke-linejoin="round"/></svg>
<div class="a" style="left:326px;top:147px;width:288px;height:33px;background:#070707"></div>
<div class="a m" style="left:342.0px;top:154.28px;font-weight:normal;font-size:18.5px;line-height:22px;color:#f4f4f4;white-space:nowrap;transform:scaleX(0.970);transform-origin:0 0;;-webkit-text-stroke:0">-62</div>
<div class="a m" style="left:382.5px;top:160.14px;font-weight:normal;font-size:11.5px;line-height:14px;color:#f4f4f4;white-space:nowrap;;-webkit-text-stroke:0">dBm</div>
<div class="a" style="left:411px;top:151.5px;width:96px;height:7.5px;background:linear-gradient(90deg,#2e2e2e 0%,#6a6a20 30%,#c8c020 60%,#ffff00 80%,#ffb000 100%)"></div>
<div class="a" style="left:518.7px;top:152px;width:6px;height:6px;border-radius:50%;background:#f4f020"></div>
<div class="a" style="left:411px;top:164px;width:200px;height:1.3px;background:#e03030"></div>
<div class="a" style="left:439.1px;top:164px;width:1px;height:2px;background:#e03030"></div>
<div class="a m" style="left:429.9px;top:167.27px;font-weight:normal;font-size:8px;line-height:10px;color:#e8e8e8;white-space:nowrap;transform:scaleX(1.010);transform-origin:0 0;;-webkit-text-stroke:0">-120</div>
<div class="a" style="left:467.8px;top:164px;width:1px;height:2px;background:#e03030"></div>
<div class="a m" style="left:458.6px;top:167.27px;font-weight:normal;font-size:8px;line-height:10px;color:#e8e8e8;white-space:nowrap;transform:scaleX(1.010);transform-origin:0 0;;-webkit-text-stroke:0">-100</div>
<div class="a" style="left:496.0px;top:164px;width:1px;height:2px;background:#e03030"></div>
<div class="a m" style="left:489.3px;top:167.27px;font-weight:normal;font-size:8px;line-height:10px;color:#e8e8e8;white-space:nowrap;;-webkit-text-stroke:0">-80</div>
<div class="a" style="left:524.1px;top:164px;width:1px;height:2px;background:#e03030"></div>
<div class="a m" style="left:517.4px;top:167.27px;font-weight:normal;font-size:8px;line-height:10px;color:#e8e8e8;white-space:nowrap;;-webkit-text-stroke:0">-60</div>
<div class="a" style="left:552.6px;top:164px;width:1px;height:2px;background:#e03030"></div>
<div class="a m" style="left:545.9px;top:167.27px;font-weight:normal;font-size:8px;line-height:10px;color:#e8e8e8;white-space:nowrap;;-webkit-text-stroke:0">-40</div>
<div class="a" style="left:581.8px;top:164px;width:1px;height:2px;background:#e03030"></div>
<div class="a m" style="left:575.1px;top:167.27px;font-weight:normal;font-size:8px;line-height:10px;color:#e8e8e8;white-space:nowrap;;-webkit-text-stroke:0">-20</div>
<div class="a" style="left:268px;top:672px;width:1612px;height:11px;background:linear-gradient(#7a7a7a 0,#5e5e5e 20%,#3c3c3c 100%)"></div>
<div class="a" style="left:268px;top:683px;width:1612px;height:10px;background:#000"></div>
<svg class="a" style="left:0;top:0" width="1920" height="1048"><rect x="285.50" y="673" width="1.5" height="4.5" fill="#a4a4a4"/><rect x="298.63" y="673" width="1.5" height="2.2" fill="#a4a4a4"/><rect x="311.75" y="673" width="1.5" height="3.2" fill="#a4a4a4"/><rect x="324.87" y="673" width="1.5" height="2.2" fill="#a4a4a4"/><rect x="338.00" y="673" width="1.5" height="3.2" fill="#a4a4a4"/><rect x="351.12" y="673" width="1.5" height="2.2" fill="#a4a4a4"/><rect x="364.25" y="673" width="1.5" height="3.2" fill="#a4a4a4"/><rect x="377.38" y="673" width="1.5" height="2.2" fill="#a4a4a4"/><rect x="390.50" y="673" width="1.5" height="3.2" fill="#a4a4a4"/><rect x="403.62" y="673" width="1.5" height="2.2" fill="#a4a4a4"/><rect x="416.75" y="673" width="1.5" height="4.5" fill="#a4a4a4"/><rect x="429.87" y="673" width="1.5" height="2.2" fill="#a4a4a4"/><rect x="443.00" y="673" width="1.5" height="3.2" fill="#a4a4a4"/><rect x="456.13" y="673" width="1.5" height="2.2" fill="#a4a4a4"/><rect x="469.25" y="673" width="1.5" height="3.2" fill="#a4a4a4"/><rect x="482.37" y="673" width="1.5" height="2.2" fill="#a4a4a4"/><rect x="495.50" y="673" width="1.5" height="3.2" fill="#a4a4a4"/><rect x="508.62" y="673" width="1.5" height="2.2" fill="#a4a4a4"/><rect x="521.75" y="673" width="1.5" height="3.2" fill="#a4a4a4"/><rect x="534.88" y="673" width="1.5" height="2.2" fill="#a4a4a4"/><rect x="548.00" y="673" width="1.5" height="4.5" fill="#a4a4a4"/><rect x="561.12" y="673" width="1.5" height="2.2" fill="#a4a4a4"/><rect x="574.25" y="673" width="1.5" height="3.2" fill="#a4a4a4"/><rect x="587.37" y="673" width="1.5" height="2.2" fill="#a4a4a4"/><rect x="600.50" y="673" width="1.5" height="3.2" fill="#a4a4a4"/><rect x="613.63" y="673" width="1.5" height="2.2" fill="#a4a4a4"/><rect x="626.75" y="673" width="1.5" height="3.2" fill="#a4a4a4"/><rect x="639.87" y="673" width="1.5" height="2.2" fill="#a4a4a4"/><rect x="653.00" y="673" width="1.5" height="3.2" fill="#a4a4a4"/><rect x="666.12" y="673" width="1.5" height="2.2" fill="#a4a4a4"/><rect x="679.25" y="673" width="1.5" height="4.5" fill="#a4a4a4"/><rect x="692.38" y="673" width="1.5" height="2.2" fill="#a4a4a4"/><rect x="705.50" y="673" width="1.5" height="3.2" fill="#a4a4a4"/><rect x="718.62" y="673" width="1.5" height="2.2" fill="#a4a4a4"/><rect x="731.75" y="673" width="1.5" height="3.2" fill="#a4a4a4"/><rect x="744.87" y="673" width="1.5" height="2.2" fill="#a4a4a4"/><rect x="758.00" y="673" width="1.5" height="3.2" fill="#a4a4a4"/><rect x="771.13" y="673" width="1.5" height="2.2" fill="#a4a4a4"/><rect x="784.25" y="673" width="1.5" height="3.2" fill="#a4a4a4"/><rect x="797.37" y="673" width="1.5" height="2.2" fill="#a4a4a4"/><rect x="810.50" y="673" width="1.5" height="4.5" fill="#a4a4a4"/><rect x="823.62" y="673" width="1.5" height="2.2" fill="#a4a4a4"/><rect x="836.75" y="673" width="1.5" height="3.2" fill="#a4a4a4"/><rect x="849.88" y="673" width="1.5" height="2.2" fill="#a4a4a4"/><rect x="863.00" y="673" width="1.5" height="3.2" fill="#a4a4a4"/><rect x="876.12" y="673" width="1.5" height="2.2" fill="#a4a4a4"/><rect x="889.25" y="673" width="1.5" height="3.2" fill="#a4a4a4"/><rect x="902.37" y="673" width="1.5" height="2.2" fill="#a4a4a4"/><rect x="915.50" y="673" width="1.5" height="3.2" fill="#a4a4a4"/><rect x="928.63" y="673" width="1.5" height="2.2" fill="#a4a4a4"/><rect x="941.75" y="673" width="1.5" height="4.5" fill="#a4a4a4"/><rect x="954.87" y="673" width="1.5" height="2.2" fill="#a4a4a4"/><rect x="968.00" y="673" width="1.5" height="3.2" fill="#a4a4a4"/><rect x="981.12" y="673" width="1.5" height="2.2" fill="#a4a4a4"/><rect x="994.25" y="673" width="1.5" height="3.2" fill="#a4a4a4"/><rect x="1007.38" y="673" width="1.5" height="2.2" fill="#a4a4a4"/><rect x="1020.50" y="673" width="1.5" height="3.2" fill="#a4a4a4"/><rect x="1033.62" y="673" width="1.5" height="2.2" fill="#a4a4a4"/><rect x="1046.75" y="673" width="1.5" height="3.2" fill="#a4a4a4"/><rect x="1059.87" y="673" width="1.5" height="2.2" fill="#a4a4a4"/><rect x="1073.00" y="673" width="1.5" height="4.5" fill="#a4a4a4"/><rect x="1086.13" y="673" width="1.5" height="2.2" fill="#a4a4a4"/><rect x="1099.25" y="673" width="1.5" height="3.2" fill="#a4a4a4"/><rect x="1112.37" y="673" width="1.5" height="2.2" fill="#a4a4a4"/><rect x="1125.50" y="673" width="1.5" height="3.2" fill="#a4a4a4"/><rect x="1138.62" y="673" width="1.5" height="2.2" fill="#a4a4a4"/><rect x="1151.75" y="673" width="1.5" height="3.2" fill="#a4a4a4"/><rect x="1164.88" y="673" width="1.5" height="2.2" fill="#a4a4a4"/><rect x="1178.00" y="673" width="1.5" height="3.2" fill="#a4a4a4"/><rect x="1191.12" y="673" width="1.5" height="2.2" fill="#a4a4a4"/><rect x="1204.25" y="673" width="1.5" height="4.5" fill="#a4a4a4"/><rect x="1217.37" y="673" width="1.5" height="2.2" fill="#a4a4a4"/><rect x="1230.50" y="673" width="1.5" height="3.2" fill="#a4a4a4"/><rect x="1243.63" y="673" width="1.5" height="2.2" fill="#a4a4a4"/><rect x="1256.75" y="673" width="1.5" height="3.2" fill="#a4a4a4"/><rect x="1269.87" y="673" width="1.5" height="2.2" fill="#a4a4a4"/><rect x="1283.00" y="673" width="1.5" height="3.2" fill="#a4a4a4"/><rect x="1296.12" y="673" width="1.5" height="2.2" fill="#a4a4a4"/><rect x="1309.25" y="673" width="1.5" height="3.2" fill="#a4a4a4"/><rect x="1322.38" y="673" width="1.5" height="2.2" fill="#a4a4a4"/><rect x="1335.50" y="673" width="1.5" height="4.5" fill="#a4a4a4"/><rect x="1348.62" y="673" width="1.5" height="2.2" fill="#a4a4a4"/><rect x="1361.75" y="673" width="1.5" height="3.2" fill="#a4a4a4"/><rect x="1374.87" y="673" width="1.5" height="2.2" fill="#a4a4a4"/><rect x="1388.00" y="673" width="1.5" height="3.2" fill="#a4a4a4"/><rect x="1401.13" y="673" width="1.5" height="2.2" fill="#a4a4a4"/><rect x="1414.25" y="673" width="1.5" height="3.2" fill="#a4a4a4"/><rect x="1427.37" y="673" width="1.5" height="2.2" fill="#a4a4a4"/><rect x="1440.50" y="673" width="1.5" height="3.2" fill="#a4a4a4"/><rect x="1453.62" y="673" width="1.5" height="2.2" fill="#a4a4a4"/><rect x="1466.75" y="673" width="1.5" height="4.5" fill="#a4a4a4"/><rect x="1479.88" y="673" width="1.5" height="2.2" fill="#a4a4a4"/><rect x="1493.00" y="673" width="1.5" height="3.2" fill="#a4a4a4"/><rect x="1506.12" y="673" width="1.5" height="2.2" fill="#a4a4a4"/><rect x="1519.25" y="673" width="1.5" height="3.2" fill="#a4a4a4"/><rect x="1532.37" y="673" width="1.5" height="2.2" fill="#a4a4a4"/><rect x="1545.50" y="673" width="1.5" height="3.2" fill="#a4a4a4"/><rect x="1558.63" y="673" width="1.5" height="2.2" fill="#a4a4a4"/><rect x="1571.75" y="673" width="1.5" height="3.2" fill="#a4a4a4"/><rect x="1584.87" y="673" width="1.5" height="2.2" fill="#a4a4a4"/><rect x="1598.00" y="673" width="1.5" height="4.5" fill="#a4a4a4"/><rect x="1611.12" y="673" width="1.5" height="2.2" fill="#a4a4a4"/><rect x="1624.25" y="673" width="1.5" height="3.2" fill="#a4a4a4"/><rect x="1637.38" y="673" width="1.5" height="2.2" fill="#a4a4a4"/><rect x="1650.50" y="673" width="1.5" height="3.2" fill="#a4a4a4"/><rect x="1663.62" y="673" width="1.5" height="2.2" fill="#a4a4a4"/><rect x="1676.75" y="673" width="1.5" height="3.2" fill="#a4a4a4"/><rect x="1689.87" y="673" width="1.5" height="2.2" fill="#a4a4a4"/><rect x="1703.00" y="673" width="1.5" height="3.2" fill="#a4a4a4"/><rect x="1716.13" y="673" width="1.5" height="2.2" fill="#a4a4a4"/><rect x="1729.25" y="673" width="1.5" height="4.5" fill="#a4a4a4"/><rect x="1742.37" y="673" width="1.5" height="2.2" fill="#a4a4a4"/><rect x="1755.50" y="673" width="1.5" height="3.2" fill="#a4a4a4"/><rect x="1768.62" y="673" width="1.5" height="2.2" fill="#a4a4a4"/><rect x="1781.75" y="673" width="1.5" height="3.2" fill="#a4a4a4"/><rect x="1794.88" y="673" width="1.5" height="2.2" fill="#a4a4a4"/><rect x="1808.00" y="673" width="1.5" height="3.2" fill="#a4a4a4"/><rect x="1821.12" y="673" width="1.5" height="2.2" fill="#a4a4a4"/><rect x="1834.25" y="673" width="1.5" height="3.2" fill="#a4a4a4"/><rect x="1847.37" y="673" width="1.5" height="2.2" fill="#a4a4a4"/><rect x="1860.50" y="673" width="1.5" height="4.5" fill="#a4a4a4"/><rect x="1873.63" y="673" width="1.5" height="2.2" fill="#a4a4a4"/></svg>
<div class="a s" style="left:268.5px;top:679.36px;font-weight:normal;font-size:10.5px;line-height:13px;color:#f4f4f4;white-space:nowrap;transform:scaleX(0.909);transform-origin:0 0;;-webkit-text-stroke:0">433.880</div>
<div class="a s" style="left:400.2px;top:679.36px;font-weight:normal;font-size:10.5px;line-height:13px;color:#f4f4f4;white-space:nowrap;transform:scaleX(0.909);transform-origin:0 0;;-webkit-text-stroke:0">433.900</div>
<div class="a s" style="left:531.5px;top:679.36px;font-weight:normal;font-size:10.5px;line-height:13px;color:#f4f4f4;white-space:nowrap;transform:scaleX(0.909);transform-origin:0 0;;-webkit-text-stroke:0">433.920</div>
<div class="a s" style="left:662.7px;top:679.36px;font-weight:normal;font-size:10.5px;line-height:13px;color:#f4f4f4;white-space:nowrap;transform:scaleX(0.909);transform-origin:0 0;;-webkit-text-stroke:0">433.940</div>
<div class="a s" style="left:794.0px;top:679.36px;font-weight:normal;font-size:10.5px;line-height:13px;color:#f4f4f4;white-space:nowrap;transform:scaleX(0.909);transform-origin:0 0;;-webkit-text-stroke:0">433.960</div>
<div class="a s" style="left:925.3px;top:679.36px;font-weight:normal;font-size:10.5px;line-height:13px;color:#f4f4f4;white-space:nowrap;transform:scaleX(0.909);transform-origin:0 0;;-webkit-text-stroke:0">433.980</div>
<div class="a s" style="left:1056.5px;top:679.36px;font-weight:normal;font-size:10.5px;line-height:13px;color:#f4f4f4;white-space:nowrap;transform:scaleX(0.909);transform-origin:0 0;;-webkit-text-stroke:0">434.000</div>
<div class="a s" style="left:1187.7px;top:679.36px;font-weight:normal;font-size:10.5px;line-height:13px;color:#f4f4f4;white-space:nowrap;transform:scaleX(0.909);transform-origin:0 0;;-webkit-text-stroke:0">434.020</div>
<div class="a s" style="left:1319.0px;top:679.36px;font-weight:normal;font-size:10.5px;line-height:13px;color:#f4f4f4;white-space:nowrap;transform:scaleX(0.909);transform-origin:0 0;;-webkit-text-stroke:0">434.040</div>
<div class="a s" style="left:1450.3px;top:679.36px;font-weight:normal;font-size:10.5px;line-height:13px;color:#f4f4f4;white-space:nowrap;transform:scaleX(0.909);transform-origin:0 0;;-webkit-text-stroke:0">434.060</div>
<div class="a s" style="left:1581.5px;top:679.36px;font-weight:normal;font-size:10.5px;line-height:13px;color:#f4f4f4;white-space:nowrap;transform:scaleX(0.909);transform-origin:0 0;;-webkit-text-stroke:0">434.080</div>
<div class="a s" style="left:1712.8px;top:679.36px;font-weight:normal;font-size:10.5px;line-height:13px;color:#f4f4f4;white-space:nowrap;transform:scaleX(0.909);transform-origin:0 0;;-webkit-text-stroke:0">434.100</div>
<div class="a s" style="left:1843.5px;top:679.36px;font-weight:normal;font-size:10.5px;line-height:13px;color:#f4f4f4;white-space:nowrap;transform:scaleX(0.909);transform-origin:0 0;;-webkit-text-stroke:0">434.120</div>
<div class="a" style="left:1634px;top:152px;width:240px;height:23px;background:#420000;border:1px solid #6a2a2a"></div>
<div class="a" style="left:1694px;top:153px;width:1px;height:21px;background:#6a2a2a"></div>
<div class="a" style="left:1754px;top:153px;width:1px;height:21px;background:#6a2a2a"></div>
<div class="a" style="left:1814px;top:153px;width:1px;height:21px;background:#6a2a2a"></div>
<div class="a s" style="left:1652.2px;top:157.34px;font-weight:normal;font-size:12px;line-height:14px;color:#e8d8d8;white-space:nowrap;transform:scaleX(1.068);transform-origin:0 0;;-webkit-text-stroke:0">Low</div>
<div class="a s" style="left:1710.5px;top:157.34px;font-weight:normal;font-size:12px;line-height:14px;color:#e8d8d8;white-space:nowrap;transform:scaleX(1.094);transform-origin:0 0;;-webkit-text-stroke:0">High</div>
<div class="a s" style="left:1826.5px;top:157.34px;font-weight:normal;font-size:12px;line-height:14px;color:#e8d8d8;white-space:nowrap;transform:scaleX(1.108);transform-origin:0 0;;-webkit-text-stroke:0">Zoom</div>
<svg class="a" style="left:1769px;top:157px" width="30" height="13" viewBox="0 0 30 13"><path d="M1.5 4V9M1.5 6.5H8" stroke="#e0d0d0" stroke-width="1.3"/><path d="M6 3.5L10.5 6.5L6 9.5Z" fill="#e0d0d0"/><path d="M14.5 1V12" stroke="#e0d0d0" stroke-width="1.3"/><path d="M27.5 4V9M27.5 6.5H21" stroke="#e0d0d0" stroke-width="1.3"/><path d="M23 3.5L18.5 6.5L23 9.5Z" fill="#e0d0d0"/></svg>
<div class="a" style="left:268px;top:693px;width:1612px;height:6px;background:#ececec"></div>
<div class="a" style="left:268px;top:693px;width:1612px;height:1px;background:#fafafa"></div>
<svg class="a" style="left:268px;top:699px;overflow:hidden" width="1612" height="297" viewBox="0 0 1612 297"><defs>
<filter id="nz" x="0" y="0" width="1612" height="296" filterUnits="userSpaceOnUse" color-interpolation-filters="sRGB">
<feTurbulence type="fractalNoise" baseFrequency="1.3" numOctaves="2" seed="4" result="t"/>
<feColorMatrix type="matrix" in="t" values="0.40 0 0 0 -0.045  0.57 0 0 0 -0.08  0.94 0 0 0 -0.04  0 0 0 0 1"/>
</filter>
<clipPath id="wfc"><rect x="0" y="0" width="1612" height="252.5"/></clipPath>
<linearGradient id="fadeR" x1="0" y1="0" x2="1" y2="0"><stop offset="0" stop-color="#fff" stop-opacity="1"/><stop offset="1" stop-color="#fff" stop-opacity="1"/></linearGradient>
</defs><rect x="0" y="0" width="1612" height="252.5" fill="#22336c"/><rect x="0" y="0" width="1612" height="252.5" filter="url(#nz)"/><rect x="0" y="252.5" width="1612" height="45" fill="#00021e"/><defs><filter id="mb" x="-100" y="-100" width="1812" height="496" filterUnits="userSpaceOnUse"><feGaussianBlur stdDeviation="14"/></filter><mask id="pm" maskUnits="userSpaceOnUse" x="0" y="0" width="1612" height="296"><path d="M-60 120 L460 -30 L1700 -40 L1700 70 L1052 128 L612 168 L-60 260Z" fill="#fff" filter="url(#mb)"/></mask></defs><g clip-path="url(#wfc)" mask="url(#pm)"><path d="M0 -69.3L1612 -312.7" stroke="#8aa6f4" stroke-width="1" opacity="0.42"/><path d="M0 -61.2L1612 -304.6" stroke="#8aa6f4" stroke-width="1" opacity="0.42"/><path d="M0 -53.1L1612 -296.5" stroke="#8aa6f4" stroke-width="1" opacity="0.42"/><path d="M0 -45.0L1612 -288.4" stroke="#8aa6f4" stroke-width="1" opacity="0.42"/><path d="M0 -36.9L1612 -280.3" stroke="#8aa6f4" stroke-width="1" opacity="0.42"/><path d="M0 -28.8L1612 -272.2" stroke="#8aa6f4" stroke-width="1" opacity="0.42"/><path d="M0 -20.7L1612 -264.1" stroke="#8aa6f4" stroke-width="1" opacity="0.42"/><path d="M0 -12.6L1612 -256.0" stroke="#8aa6f4" stroke-width="1" opacity="0.42"/><path d="M0 -4.5L1612 -247.9" stroke="#8aa6f4" stroke-width="1" opacity="0.42"/><path d="M0 3.6L1612 -239.8" stroke="#8aa6f4" stroke-width="1" opacity="0.42"/><path d="M0 11.7L1612 -231.7" stroke="#8aa6f4" stroke-width="1" opacity="0.42"/><path d="M0 19.8L1612 -223.6" stroke="#8aa6f4" stroke-width="1" opacity="0.42"/><path d="M0 27.9L1612 -215.5" stroke="#8aa6f4" stroke-width="1" opacity="0.42"/><path d="M0 36.0L1612 -207.4" stroke="#8aa6f4" stroke-width="1" opacity="0.42"/><path d="M0 44.1L1612 -199.3" stroke="#8aa6f4" stroke-width="1" opacity="0.42"/><path d="M0 52.2L1612 -191.2" stroke="#8aa6f4" stroke-width="1" opacity="0.42"/><path d="M0 60.3L1612 -183.1" stroke="#8aa6f4" stroke-width="1" opacity="0.42"/><path d="M0 68.4L1612 -175.0" stroke="#8aa6f4" stroke-width="1" opacity="0.42"/><path d="M0 76.5L1612 -166.9" stroke="#8aa6f4" stroke-width="1" opacity="0.42"/><path d="M0 84.6L1612 -158.8" stroke="#8aa6f4" stroke-width="1" opacity="0.42"/><path d="M0 92.7L1612 -150.7" stroke="#8aa6f4" stroke-width="1" opacity="0.42"/><path d="M0 100.8L1612 -142.6" stroke="#8aa6f4" stroke-width="1" opacity="0.42"/><path d="M0 108.9L1612 -134.5" stroke="#8aa6f4" stroke-width="1" opacity="0.42"/><path d="M0 117.0L1612 -126.4" stroke="#8aa6f4" stroke-width="1" opacity="0.42"/><path d="M0 125.1L1612 -118.3" stroke="#8aa6f4" stroke-width="1" opacity="0.42"/><path d="M0 133.2L1612 -110.2" stroke="#8aa6f4" stroke-width="1" opacity="0.42"/><path d="M0 141.3L1612 -102.1" stroke="#8aa6f4" stroke-width="1" opacity="0.42"/><path d="M0 149.4L1612 -94.0" stroke="#8aa6f4" stroke-width="1" opacity="0.42"/><path d="M0 157.5L1612 -85.9" stroke="#8aa6f4" stroke-width="1" opacity="0.42"/><path d="M0 165.6L1612 -77.8" stroke="#8aa6f4" stroke-width="1" opacity="0.42"/><path d="M0 181.8L1612 -61.6" stroke="#8aa6f4" stroke-width="1" opacity="0.42"/><path d="M0 189.9L1612 -53.5" stroke="#8aa6f4" stroke-width="1" opacity="0.42"/><path d="M0 198.0L1612 -45.4" stroke="#8aa6f4" stroke-width="1" opacity="0.42"/><path d="M0 206.1L1612 -37.3" stroke="#8aa6f4" stroke-width="1" opacity="0.42"/><path d="M0 214.2L1612 -29.2" stroke="#8aa6f4" stroke-width="1" opacity="0.42"/><path d="M0 222.3L1612 -21.1" stroke="#8aa6f4" stroke-width="1" opacity="0.42"/><path d="M0 230.4L1612 -13.0" stroke="#8aa6f4" stroke-width="1" opacity="0.42"/><path d="M0 238.5L1612 -4.9" stroke="#8aa6f4" stroke-width="1" opacity="0.42"/><path d="M0 246.6L1612 3.2" stroke="#8aa6f4" stroke-width="1" opacity="0.42"/><path d="M0 254.7L1612 11.3" stroke="#8aa6f4" stroke-width="1" opacity="0.42"/><path d="M0 262.8L1612 19.4" stroke="#8aa6f4" stroke-width="1" opacity="0.42"/><path d="M0 270.9L1612 27.5" stroke="#8aa6f4" stroke-width="1" opacity="0.42"/><path d="M0 279.0L1612 35.6" stroke="#8aa6f4" stroke-width="1" opacity="0.42"/><path d="M0 287.1L1612 43.7" stroke="#8aa6f4" stroke-width="1" opacity="0.42"/><path d="M0 295.2L1612 51.8" stroke="#8aa6f4" stroke-width="1" opacity="0.42"/><path d="M0 303.3L1612 59.9" stroke="#8aa6f4" stroke-width="1" opacity="0.42"/><path d="M0 311.4L1612 68.0" stroke="#8aa6f4" stroke-width="1" opacity="0.42"/><path d="M0 319.5L1612 76.1" stroke="#8aa6f4" stroke-width="1" opacity="0.42"/><path d="M0 327.6L1612 84.2" stroke="#8aa6f4" stroke-width="1" opacity="0.42"/><path d="M0 335.7L1612 92.3" stroke="#8aa6f4" stroke-width="1" opacity="0.42"/><path d="M0 343.8L1612 100.4" stroke="#8aa6f4" stroke-width="1" opacity="0.42"/><path d="M0 351.9L1612 108.5" stroke="#8aa6f4" stroke-width="1" opacity="0.42"/><path d="M0 360.0L1612 116.6" stroke="#8aa6f4" stroke-width="1" opacity="0.42"/><path d="M0 368.1L1612 124.7" stroke="#8aa6f4" stroke-width="1" opacity="0.42"/><path d="M0 376.2L1612 132.8" stroke="#8aa6f4" stroke-width="1" opacity="0.42"/><path d="M0 384.3L1612 140.9" stroke="#8aa6f4" stroke-width="1" opacity="0.42"/><path d="M0 392.4L1612 149.0" stroke="#8aa6f4" stroke-width="1" opacity="0.42"/><path d="M0 400.5L1612 157.1" stroke="#8aa6f4" stroke-width="1" opacity="0.42"/><path d="M0 408.6L1612 165.2" stroke="#8aa6f4" stroke-width="1" opacity="0.42"/><path d="M0 416.7L1612 173.3" stroke="#8aa6f4" stroke-width="1" opacity="0.42"/><path d="M0 424.8L1612 181.4" stroke="#8aa6f4" stroke-width="1" opacity="0.42"/><path d="M0 432.9L1612 189.5" stroke="#8aa6f4" stroke-width="1" opacity="0.42"/><path d="M0 441.0L1612 197.6" stroke="#8aa6f4" stroke-width="1" opacity="0.42"/><path d="M0 449.1L1612 205.7" stroke="#8aa6f4" stroke-width="1" opacity="0.42"/><path d="M0 457.2L1612 213.8" stroke="#8aa6f4" stroke-width="1" opacity="0.42"/><path d="M0 465.3L1612 221.9" stroke="#8aa6f4" stroke-width="1" opacity="0.42"/><path d="M0 473.4L1612 230.0" stroke="#8aa6f4" stroke-width="1" opacity="0.42"/><path d="M0 481.5L1612 238.1" stroke="#8aa6f4" stroke-width="1" opacity="0.42"/><path d="M0 489.6L1612 246.2" stroke="#8aa6f4" stroke-width="1" opacity="0.42"/></g><path d="M0 77.5L1612 162" stroke="#6a8ae8" stroke-width="1.3" opacity=".65"/><path d="M0 115.5L1612 67.5" stroke="#6a8ae8" stroke-width="1.2" opacity=".45"/><path d="M0 253L1612 220" stroke="#6a8ae8" stroke-width="1.1" opacity=".5" clip-path="url(#wfc)"/><path d="M0 173.7L1612 -69.7" stroke="#7a9af4" stroke-width="6" opacity=".45"/><path d="M0 173.7L1612 -69.7" stroke="#ffffff" stroke-width="2.5"/><path d="M793.5 0V296M820.5 0V296" stroke="#3a9a3a" stroke-width="1" stroke-dasharray="2 2"/></svg>
<svg class="a" style="left:0;top:694.5px" width="1200" height="3"><rect x="1043.0" y="0" width="1.7" height="1.7" fill="#4a4a4a"/><rect x="1047.1" y="0" width="1.7" height="1.7" fill="#4a4a4a"/><rect x="1051.2" y="0" width="1.7" height="1.7" fill="#4a4a4a"/><rect x="1055.2" y="0" width="1.7" height="1.7" fill="#4a4a4a"/><rect x="1059.3" y="0" width="1.7" height="1.7" fill="#4a4a4a"/><rect x="1063.4" y="0" width="1.7" height="1.7" fill="#4a4a4a"/><rect x="1067.5" y="0" width="1.7" height="1.7" fill="#4a4a4a"/><rect x="1071.6" y="0" width="1.7" height="1.7" fill="#4a4a4a"/><rect x="1075.6" y="0" width="1.7" height="1.7" fill="#4a4a4a"/><rect x="1079.7" y="0" width="1.7" height="1.7" fill="#4a4a4a"/><rect x="1083.8" y="0" width="1.7" height="1.7" fill="#4a4a4a"/><rect x="1087.9" y="0" width="1.7" height="1.7" fill="#4a4a4a"/><rect x="1092.0" y="0" width="1.7" height="1.7" fill="#4a4a4a"/><rect x="1096.0" y="0" width="1.7" height="1.7" fill="#4a4a4a"/><rect x="1100.1" y="0" width="1.7" height="1.7" fill="#4a4a4a"/><rect x="1104.2" y="0" width="1.7" height="1.7" fill="#4a4a4a"/></svg>
<div class="a" style="left:991px;top:927px;width:166px;height:58px;border-radius:5px;background:rgba(6,6,12,.8)"></div>
<div class="a m" style="left:1000.0px;top:938.38px;font-weight:normal;font-size:13.6px;line-height:16px;color:#f4f4f4;white-space:nowrap;white-space:pre;-webkit-text-stroke:0">Freq:      434 MHz</div>
<div class="a m" style="left:1000.0px;top:960.98px;font-weight:normal;font-size:13.6px;line-height:16px;color:#f4f4f4;white-space:nowrap;white-space:pre;-webkit-text-stroke:0">Span: ±122.745 kHz</div>
<div class="a" style="left:268px;top:996px;width:1612px;height:1px;background:#d8d8d8"></div>
<div class="a" style="left:268px;top:997px;width:1612px;height:26px;background:#000"></div>
<div class="a" style="left:296px;top:997px;width:1467px;height:12px;background:linear-gradient(#3e3e3e,#1c1c1c)"></div>
<div class="a" style="left:881px;top:997px;width:294px;height:26px;background:linear-gradient(#8a8a8a 0%,#5a5a5a 35%,#2e2e2e 100%);border-left:1px solid #b0b0b0;border-right:1px solid #b0b0b0"></div>
<div class="a" style="left:882px;top:1008px;width:292px;height:15px;background:radial-gradient(ellipse 50% 100% at 50% 100%,rgba(200,200,0,.85) 0%,rgba(150,150,0,.5) 50%,rgba(60,60,0,0) 100%)"></div>
<div class="a" style="left:1027.5px;top:997px;width:1.5px;height:26px;background:#ffff40"></div>
<svg class="a" style="left:0;top:0" width="1920" height="1048"><rect x="296.7" y="998" width="1.5" height="3" fill="#9a9a9a"/><rect x="308.6" y="998" width="1.5" height="5" fill="#9a9a9a"/><rect x="320.6" y="998" width="1.5" height="3" fill="#9a9a9a"/><rect x="332.6" y="998" width="1.5" height="3" fill="#9a9a9a"/><rect x="344.6" y="998" width="1.5" height="3" fill="#9a9a9a"/><rect x="356.5" y="998" width="1.5" height="3" fill="#9a9a9a"/><rect x="368.5" y="998" width="1.5" height="5" fill="#9a9a9a"/><rect x="380.5" y="998" width="1.5" height="3" fill="#9a9a9a"/><rect x="392.4" y="998" width="1.5" height="3" fill="#9a9a9a"/><rect x="404.4" y="998" width="1.5" height="3" fill="#9a9a9a"/><rect x="416.4" y="998" width="1.5" height="3" fill="#9a9a9a"/><rect x="428.3" y="998" width="1.5" height="5" fill="#9a9a9a"/><rect x="440.3" y="998" width="1.5" height="3" fill="#9a9a9a"/><rect x="452.3" y="998" width="1.5" height="3" fill="#9a9a9a"/><rect x="464.3" y="998" width="1.5" height="3" fill="#9a9a9a"/><rect x="476.2" y="998" width="1.5" height="3" fill="#9a9a9a"/><rect x="488.2" y="998" width="1.5" height="5" fill="#9a9a9a"/><rect x="500.2" y="998" width="1.5" height="3" fill="#9a9a9a"/><rect x="512.1" y="998" width="1.5" height="3" fill="#9a9a9a"/><rect x="524.1" y="998" width="1.5" height="3" fill="#9a9a9a"/><rect x="536.1" y="998" width="1.5" height="3" fill="#9a9a9a"/><rect x="548.1" y="998" width="1.5" height="5" fill="#9a9a9a"/><rect x="560.0" y="998" width="1.5" height="3" fill="#9a9a9a"/><rect x="572.0" y="998" width="1.5" height="3" fill="#9a9a9a"/><rect x="584.0" y="998" width="1.5" height="3" fill="#9a9a9a"/><rect x="595.9" y="998" width="1.5" height="3" fill="#9a9a9a"/><rect x="607.9" y="998" width="1.5" height="5" fill="#9a9a9a"/><rect x="619.9" y="998" width="1.5" height="3" fill="#9a9a9a"/><rect x="631.8" y="998" width="1.5" height="3" fill="#9a9a9a"/><rect x="643.8" y="998" width="1.5" height="3" fill="#9a9a9a"/><rect x="655.8" y="998" width="1.5" height="3" fill="#9a9a9a"/><rect x="667.7" y="998" width="1.5" height="5" fill="#9a9a9a"/><rect x="679.7" y="998" width="1.5" height="3" fill="#9a9a9a"/><rect x="691.7" y="998" width="1.5" height="3" fill="#9a9a9a"/><rect x="703.7" y="998" width="1.5" height="3" fill="#9a9a9a"/><rect x="715.6" y="998" width="1.5" height="3" fill="#9a9a9a"/><rect x="727.6" y="998" width="1.5" height="5" fill="#9a9a9a"/><rect x="739.6" y="998" width="1.5" height="3" fill="#9a9a9a"/><rect x="751.5" y="998" width="1.5" height="3" fill="#9a9a9a"/><rect x="763.5" y="998" width="1.5" height="3" fill="#9a9a9a"/><rect x="775.5" y="998" width="1.5" height="3" fill="#9a9a9a"/><rect x="787.5" y="998" width="1.5" height="5" fill="#9a9a9a"/><rect x="799.4" y="998" width="1.5" height="3" fill="#9a9a9a"/><rect x="811.4" y="998" width="1.5" height="3" fill="#9a9a9a"/><rect x="823.4" y="998" width="1.5" height="3" fill="#9a9a9a"/><rect x="835.3" y="998" width="1.5" height="3" fill="#9a9a9a"/><rect x="847.3" y="998" width="1.5" height="5" fill="#9a9a9a"/><rect x="859.3" y="998" width="1.5" height="3" fill="#9a9a9a"/><rect x="871.2" y="998" width="1.5" height="3" fill="#9a9a9a"/><rect x="883.2" y="998" width="1.5" height="3" fill="#9a9a9a"/><rect x="895.2" y="998" width="1.5" height="3" fill="#9a9a9a"/><rect x="907.1" y="998" width="1.5" height="5" fill="#9a9a9a"/><rect x="919.1" y="998" width="1.5" height="3" fill="#9a9a9a"/><rect x="931.1" y="998" width="1.5" height="3" fill="#9a9a9a"/><rect x="943.1" y="998" width="1.5" height="3" fill="#9a9a9a"/><rect x="955.0" y="998" width="1.5" height="3" fill="#9a9a9a"/><rect x="967.0" y="998" width="1.5" height="5" fill="#9a9a9a"/><rect x="979.0" y="998" width="1.5" height="3" fill="#9a9a9a"/><rect x="990.9" y="998" width="1.5" height="3" fill="#9a9a9a"/><rect x="1002.9" y="998" width="1.5" height="3" fill="#9a9a9a"/><rect x="1014.9" y="998" width="1.5" height="3" fill="#9a9a9a"/><rect x="1026.8" y="998" width="1.5" height="5" fill="#9a9a9a"/><rect x="1038.8" y="998" width="1.5" height="3" fill="#9a9a9a"/><rect x="1050.8" y="998" width="1.5" height="3" fill="#9a9a9a"/><rect x="1062.8" y="998" width="1.5" height="3" fill="#9a9a9a"/><rect x="1074.7" y="998" width="1.5" height="3" fill="#9a9a9a"/><rect x="1086.7" y="998" width="1.5" height="5" fill="#9a9a9a"/><rect x="1098.7" y="998" width="1.5" height="3" fill="#9a9a9a"/><rect x="1110.6" y="998" width="1.5" height="3" fill="#9a9a9a"/><rect x="1122.6" y="998" width="1.5" height="3" fill="#9a9a9a"/><rect x="1134.6" y="998" width="1.5" height="3" fill="#9a9a9a"/><rect x="1146.6" y="998" width="1.5" height="5" fill="#9a9a9a"/><rect x="1158.5" y="998" width="1.5" height="3" fill="#9a9a9a"/><rect x="1170.5" y="998" width="1.5" height="3" fill="#9a9a9a"/><rect x="1182.5" y="998" width="1.5" height="3" fill="#9a9a9a"/><rect x="1194.4" y="998" width="1.5" height="3" fill="#9a9a9a"/><rect x="1206.4" y="998" width="1.5" height="5" fill="#9a9a9a"/><rect x="1218.4" y="998" width="1.5" height="3" fill="#9a9a9a"/><rect x="1230.3" y="998" width="1.5" height="3" fill="#9a9a9a"/><rect x="1242.3" y="998" width="1.5" height="3" fill="#9a9a9a"/><rect x="1254.3" y="998" width="1.5" height="3" fill="#9a9a9a"/><rect x="1266.2" y="998" width="1.5" height="5" fill="#9a9a9a"/><rect x="1278.2" y="998" width="1.5" height="3" fill="#9a9a9a"/><rect x="1290.2" y="998" width="1.5" height="3" fill="#9a9a9a"/><rect x="1302.2" y="998" width="1.5" height="3" fill="#9a9a9a"/><rect x="1314.1" y="998" width="1.5" height="3" fill="#9a9a9a"/><rect x="1326.1" y="998" width="1.5" height="5" fill="#9a9a9a"/><rect x="1338.1" y="998" width="1.5" height="3" fill="#9a9a9a"/><rect x="1350.0" y="998" width="1.5" height="3" fill="#9a9a9a"/><rect x="1362.0" y="998" width="1.5" height="3" fill="#9a9a9a"/><rect x="1374.0" y="998" width="1.5" height="3" fill="#9a9a9a"/><rect x="1386.0" y="998" width="1.5" height="5" fill="#9a9a9a"/><rect x="1397.9" y="998" width="1.5" height="3" fill="#9a9a9a"/><rect x="1409.9" y="998" width="1.5" height="3" fill="#9a9a9a"/><rect x="1421.9" y="998" width="1.5" height="3" fill="#9a9a9a"/><rect x="1433.8" y="998" width="1.5" height="3" fill="#9a9a9a"/><rect x="1445.8" y="998" width="1.5" height="5" fill="#9a9a9a"/><rect x="1457.8" y="998" width="1.5" height="3" fill="#9a9a9a"/><rect x="1469.7" y="998" width="1.5" height="3" fill="#9a9a9a"/><rect x="1481.7" y="998" width="1.5" height="3" fill="#9a9a9a"/><rect x="1493.7" y="998" width="1.5" height="3" fill="#9a9a9a"/><rect x="1505.6" y="998" width="1.5" height="5" fill="#9a9a9a"/><rect x="1517.6" y="998" width="1.5" height="3" fill="#9a9a9a"/><rect x="1529.6" y="998" width="1.5" height="3" fill="#9a9a9a"/><rect x="1541.6" y="998" width="1.5" height="3" fill="#9a9a9a"/><rect x="1553.5" y="998" width="1.5" height="3" fill="#9a9a9a"/><rect x="1565.5" y="998" width="1.5" height="5" fill="#9a9a9a"/><rect x="1577.5" y="998" width="1.5" height="3" fill="#9a9a9a"/><rect x="1589.4" y="998" width="1.5" height="3" fill="#9a9a9a"/><rect x="1601.4" y="998" width="1.5" height="3" fill="#9a9a9a"/><rect x="1613.4" y="998" width="1.5" height="3" fill="#9a9a9a"/><rect x="1625.3" y="998" width="1.5" height="5" fill="#9a9a9a"/><rect x="1637.3" y="998" width="1.5" height="3" fill="#9a9a9a"/><rect x="1649.3" y="998" width="1.5" height="3" fill="#9a9a9a"/><rect x="1661.3" y="998" width="1.5" height="3" fill="#9a9a9a"/><rect x="1673.2" y="998" width="1.5" height="3" fill="#9a9a9a"/><rect x="1685.2" y="998" width="1.5" height="5" fill="#9a9a9a"/><rect x="1697.2" y="998" width="1.5" height="3" fill="#9a9a9a"/><rect x="1709.1" y="998" width="1.5" height="3" fill="#9a9a9a"/><rect x="1721.1" y="998" width="1.5" height="3" fill="#9a9a9a"/><rect x="1733.1" y="998" width="1.5" height="3" fill="#9a9a9a"/><rect x="1745.1" y="998" width="1.5" height="5" fill="#9a9a9a"/><rect x="1757.0" y="998" width="1.5" height="3" fill="#9a9a9a"/></svg>
<div class="a s" style="left:286.9px;top:1006.17px;font-weight:normal;font-size:12.5px;line-height:15px;color:#b4b4b4;white-space:nowrap;;-webkit-text-stroke:0">433.400</div>
<div class="a s" style="left:406.6px;top:1006.17px;font-weight:normal;font-size:12.5px;line-height:15px;color:#b4b4b4;white-space:nowrap;;-webkit-text-stroke:0">433.500</div>
<div class="a s" style="left:526.3px;top:1006.17px;font-weight:normal;font-size:12.5px;line-height:15px;color:#b4b4b4;white-space:nowrap;;-webkit-text-stroke:0">433.600</div>
<div class="a s" style="left:646.0px;top:1006.17px;font-weight:normal;font-size:12.5px;line-height:15px;color:#b4b4b4;white-space:nowrap;;-webkit-text-stroke:0">433.700</div>
<div class="a s" style="left:765.7px;top:1006.17px;font-weight:normal;font-size:12.5px;line-height:15px;color:#b4b4b4;white-space:nowrap;;-webkit-text-stroke:0">433.800</div>
<div class="a s" style="left:885.4px;top:1006.17px;font-weight:normal;font-size:12.5px;line-height:15px;color:#c4c4c4;white-space:nowrap;;-webkit-text-stroke:0">433.900</div>
<div class="a s" style="left:1005.1px;top:1006.17px;font-weight:normal;font-size:12.5px;line-height:15px;color:#c4c4c4;white-space:nowrap;;-webkit-text-stroke:0">434.000</div>
<div class="a s" style="left:1124.8px;top:1006.17px;font-weight:normal;font-size:12.5px;line-height:15px;color:#c4c4c4;white-space:nowrap;;-webkit-text-stroke:0">434.100</div>
<div class="a s" style="left:1244.5px;top:1006.17px;font-weight:normal;font-size:12.5px;line-height:15px;color:#b4b4b4;white-space:nowrap;;-webkit-text-stroke:0">434.200</div>
<div class="a s" style="left:1364.2px;top:1006.17px;font-weight:normal;font-size:12.5px;line-height:15px;color:#b4b4b4;white-space:nowrap;;-webkit-text-stroke:0">434.300</div>
<div class="a s" style="left:1483.9px;top:1006.17px;font-weight:normal;font-size:12.5px;line-height:15px;color:#b4b4b4;white-space:nowrap;;-webkit-text-stroke:0">434.400</div>
<div class="a s" style="left:1603.6px;top:1006.17px;font-weight:normal;font-size:12.5px;line-height:15px;color:#b4b4b4;white-space:nowrap;;-webkit-text-stroke:0">434.500</div>
<div class="a s" style="left:1723.3px;top:1006.17px;font-weight:normal;font-size:12.5px;line-height:15px;color:#b4b4b4;white-space:nowrap;;-webkit-text-stroke:0">434.600</div>
<div class="a" style="left:268px;top:997px;width:27px;height:27px;background:#f0f0f0"></div>
<div class="a" style="left:270px;top:998px;width:25px;height:24px;background:linear-gradient(#f4f4f4,#e0e0e0);border:1px solid #a8a8a8"></div>
<svg class="a" style="left:273px;top:1001px" width="18" height="18" viewBox="0 0 18 18"><circle cx="9" cy="9" r="7.2" fill="#f6f6f6" stroke="#333" stroke-width="1.4"/><path d="M8.6 5.5L5 9L8.6 12.5ZM12.6 5.5L9 9L12.6 12.5Z" fill="#222"/></svg>
<div class="a" style="left:1762px;top:996px;width:118px;height:27px;background:#f0f0f0"></div>
<div class="a" style="left:1763px;top:998px;width:37px;height:24px;background:linear-gradient(#f2f2f2,#e2e2e2);border:1px solid #ababab"></div>
<div class="a" style="left:1802px;top:998px;width:49px;height:24px;background:linear-gradient(#f2f2f2,#e2e2e2);border:1px solid #ababab"></div>
<div class="a" style="left:1854px;top:998px;width:25px;height:24px;background:linear-gradient(#f2f2f2,#e2e2e2);border:1px solid #ababab"></div>
<svg class="a" style="left:1773px;top:1003px" width="17" height="13" viewBox="0 0 17 13"><rect x=".5" y="4.5" width="16" height="8" fill="#e8e8e8" stroke="#444" stroke-width="1"/><path d="M2 7H15M2 9H15M4 11H13" stroke="#555" stroke-width=".8" stroke-dasharray="1 1"/><path d="M9 4.5 V2 L11 0.5" stroke="#555" stroke-width=".8" fill="none"/></svg>
<div class="a s" style="left:1811.0px;top:1003.34px;font-weight:normal;font-size:12px;line-height:14px;color:#222;white-space:nowrap;transform:scaleX(1.105);transform-origin:0 0;">x5</div>
<svg class="a" style="left:1839px;top:1005px" width="5" height="9"><path d="M0 0V9L5 4.5Z" fill="#111"/></svg>
<svg class="a" style="left:1857px;top:1001px" width="18" height="18" viewBox="0 0 18 18"><circle cx="9" cy="9" r="7.2" fill="#f6f6f6" stroke="#333" stroke-width="1.4"/><path d="M5.4 5.5L9 9L5.4 12.5ZM9.4 5.5L13 9L9.4 12.5Z" fill="#222"/></svg>
<div class="a" style="left:1880px;top:146px;width:2px;height:851px;background:#a0a0a0"></div>
<div class="a" style="left:1879px;top:997px;width:3px;height:27px;background:#f0f0f0"></div>
<div class="a" style="left:1882px;top:146px;width:36px;height:877px;background:#000"></div>
<div class="a" style="left:1918px;top:146px;width:2px;height:877px;background:#d8d8d8"></div>
<div class="a" style="left:1882px;top:147px;width:36px;height:28px;background:linear-gradient(#5a5a5a 0%,#2a2a2a 45%,#000 50%,#000 100%)"></div>
<div class="a" style="left:1882px;top:175px;width:36px;height:1px;background:#3a3a3a"></div>
<div class="a s" style="left:1888.2px;top:153.61px;font-weight:normal;font-size:11.5px;line-height:14px;color:#f0f0f0;white-space:nowrap;;-webkit-text-stroke:0">Auto</div>
<div class="a" style="left:1883px;top:270px;width:34px;height:360px;background:linear-gradient(#ffff00 0%,#ffffa0 5%,#ffffff 10%,#ffffff 26%,#d8e0fa 36%,#98aef4 52%,#4a6ce0 62%,#2a44b0 72%,#18287a 84%,#080c3a 96%,#04061e 100%)"></div>
<div class="a" style="left:1883px;top:629px;width:34px;height:2px;background:#f0f0f0"></div>
<div class="a s" style="left:1893.5px;top:222.68px;font-weight:normal;font-size:9px;line-height:11px;color:#b4b4b4;white-space:nowrap;-webkit-text-stroke:0">-10</div>
<div class="a" style="left:1886px;top:272.5px;width:28px;height:17.5px;border-radius:4px;background:rgba(40,40,40,.5)"></div>
<div class="a s" style="left:1893.5px;top:275.68px;font-weight:normal;font-size:9px;line-height:11px;color:#b4b4b4;white-space:nowrap;-webkit-text-stroke:0">-20</div>
<div class="a" style="left:1886px;top:325.5px;width:28px;height:17.5px;border-radius:4px;background:rgba(40,40,40,.5)"></div>
<div class="a s" style="left:1893.5px;top:328.68px;font-weight:normal;font-size:9px;line-height:11px;color:#b4b4b4;white-space:nowrap;-webkit-text-stroke:0">-30</div>
<div class="a" style="left:1886px;top:378.5px;width:28px;height:17.5px;border-radius:4px;background:rgba(40,40,40,.5)"></div>
<div class="a s" style="left:1893.5px;top:381.68px;font-weight:normal;font-size:9px;line-height:11px;color:#b4b4b4;white-space:nowrap;-webkit-text-stroke:0">-40</div>
<div class="a" style="left:1886px;top:431.5px;width:28px;height:17.5px;border-radius:4px;background:rgba(40,40,40,.5)"></div>
<div class="a s" style="left:1893.5px;top:434.68px;font-weight:normal;font-size:9px;line-height:11px;color:#b4b4b4;white-space:nowrap;-webkit-text-stroke:0">-50</div>
<div class="a" style="left:1886px;top:484.5px;width:28px;height:17.5px;border-radius:4px;background:rgba(40,40,40,.5)"></div>
<div class="a s" style="left:1893.5px;top:487.68px;font-weight:normal;font-size:9px;line-height:11px;color:#b4b4b4;white-space:nowrap;-webkit-text-stroke:0">-60</div>
<div class="a" style="left:1886px;top:537.5px;width:28px;height:17.5px;border-radius:4px;background:rgba(40,40,40,.5)"></div>
<div class="a s" style="left:1893.5px;top:540.68px;font-weight:normal;font-size:9px;line-height:11px;color:#b4b4b4;white-space:nowrap;-webkit-text-stroke:0">-70</div>
<div class="a" style="left:1886px;top:590.5px;width:28px;height:17.5px;border-radius:4px;background:rgba(40,40,40,.5)"></div>
<div class="a s" style="left:1893.5px;top:593.68px;font-weight:normal;font-size:9px;line-height:11px;color:#b4b4b4;white-space:nowrap;-webkit-text-stroke:0">-80</div>
<div class="a s" style="left:1893.5px;top:646.68px;font-weight:normal;font-size:9px;line-height:11px;color:#b4b4b4;white-space:nowrap;-webkit-text-stroke:0">-90</div>
<div class="a s" style="left:1891.0px;top:699.68px;font-weight:normal;font-size:9px;line-height:11px;color:#b4b4b4;white-space:nowrap;-webkit-text-stroke:0">-100</div>
<div class="a s" style="left:1891.3px;top:752.68px;font-weight:normal;font-size:9px;line-height:11px;color:#b4b4b4;white-space:nowrap;-webkit-text-stroke:0">-110</div>
<div class="a s" style="left:1891.0px;top:805.68px;font-weight:normal;font-size:9px;line-height:11px;color:#b4b4b4;white-space:nowrap;-webkit-text-stroke:0">-120</div>
<div class="a s" style="left:1891.0px;top:858.68px;font-weight:normal;font-size:9px;line-height:11px;color:#b4b4b4;white-space:nowrap;-webkit-text-stroke:0">-130</div>
<div class="a s" style="left:1891.0px;top:911.68px;font-weight:normal;font-size:9px;line-height:11px;color:#b4b4b4;white-space:nowrap;-webkit-text-stroke:0">-140</div>
<div class="a s" style="left:1891.0px;top:964.68px;font-weight:normal;font-size:9px;line-height:11px;color:#b4b4b4;white-space:nowrap;-webkit-text-stroke:0">-150</div>
<div class="a" style="left:0;top:1024px;width:1920px;height:24px;background:#f0f0f0"></div>
<div class="a s" style="left:9.0px;top:1029.79px;font-weight:normal;font-size:11px;line-height:13px;color:#555;white-space:nowrap;transform:scaleX(0.964);transform-origin:0 0;">SDRPlay RSP1, BW = 1.000 MHz</div>
<div class="a s" style="left:1448.2px;top:1029.79px;font-weight:normal;font-size:11px;line-height:13px;color:#222;white-space:nowrap;transform:scaleX(0.934);transform-origin:0 0;">CPU: 1.5%</div>
<div class="a s" style="left:1597.3px;top:1029.79px;font-weight:normal;font-size:11px;line-height:13px;color:#222;white-space:nowrap;transform:scaleX(1.019);transform-origin:0 0;">Audio: 17ms</div>
<div class="a s" style="left:1758.3px;top:1029.79px;font-weight:normal;font-size:11px;line-height:13px;color:#222;white-space:nowrap;transform:scaleX(0.973);transform-origin:0 0;">Size: 504.2 MB</div>
<div class="a" style="left:1513px;top:1031px;width:70px;height:12px;background:#e6e6e6;border:1px solid #bcbcbc"></div>
<div class="a" style="left:1674px;top:1031px;width:70px;height:12px;background:#e6e6e6;border:1px solid #bcbcbc"></div>
<div class="a" style="left:1676px;top:1033px;width:20px;height:8px;background:#06b025"></div>
<div class="a" style="left:1845px;top:1031px;width:70px;height:12px;background:#e6e6e6;border:1px solid #bcbcbc"></div>
<div class="a" style="left:1847px;top:1033px;width:2px;height:8px;background:#06b025"></div></body></html>
